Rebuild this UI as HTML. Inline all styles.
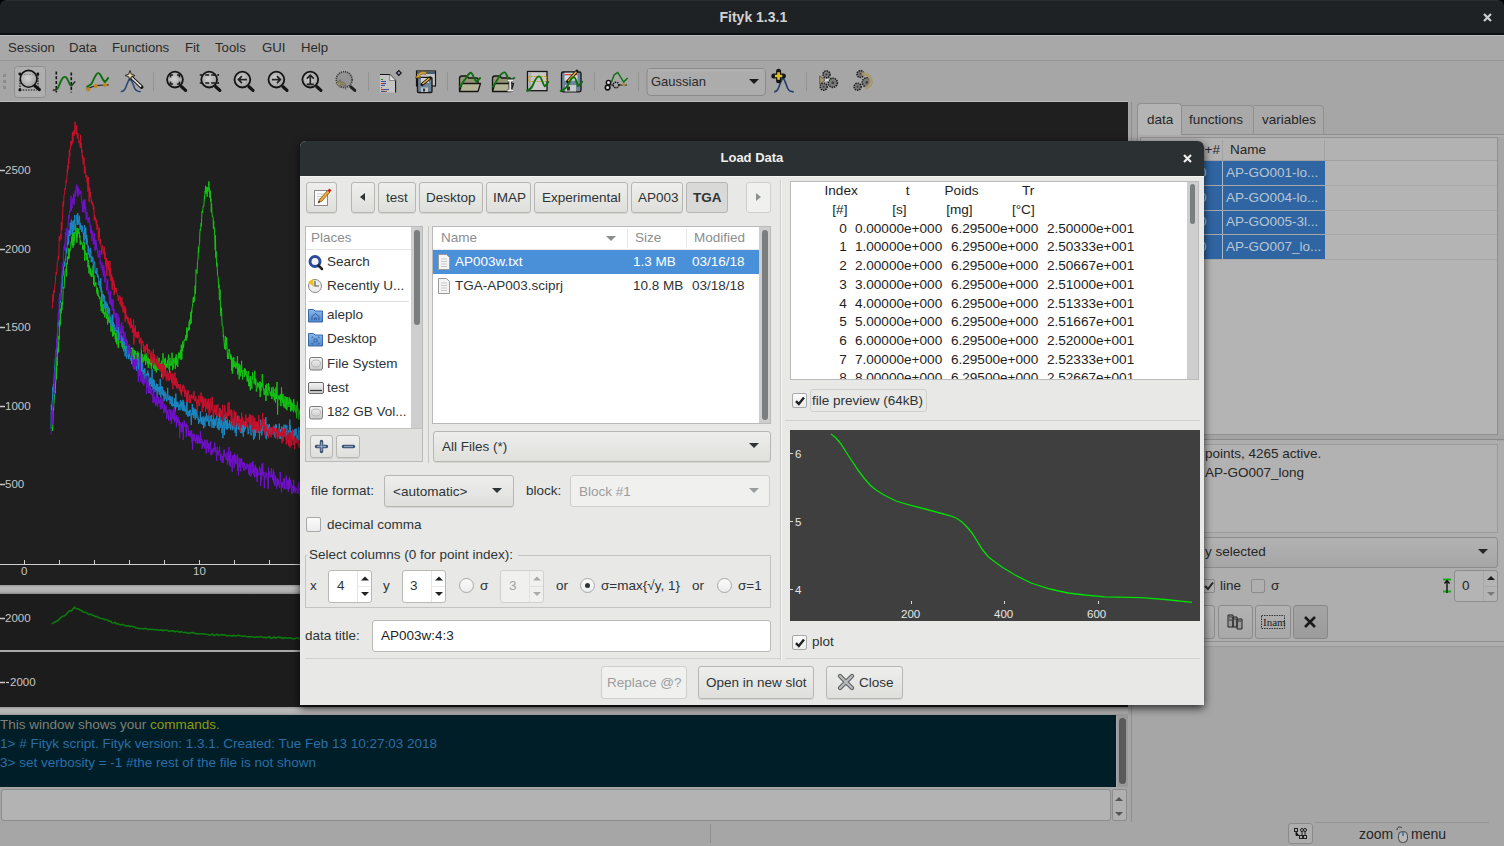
<!DOCTYPE html>
<html><head><meta charset="utf-8">
<style>
*{box-sizing:border-box;margin:0;padding:0}
html,body{width:1504px;height:846px;overflow:hidden;background:#a6a6a6;font-family:"Liberation Sans",sans-serif;font-size:13px;color:#2b2b2b}
.a{position:absolute}
.t{position:absolute;white-space:nowrap;line-height:1}
svg{position:absolute;overflow:visible}
/* main window */
#title{left:0;top:0;width:1504px;height:35px;background:#1f2224;border-bottom:2px solid #0c0e0f}
#menubar{left:0;top:35px;width:1504px;height:26px;background:#a8a8a8;border-top:1px solid #bdbdbd;border-bottom:1px solid #969696}
#toolbar{left:0;top:61px;width:1504px;height:41px;background:#a6a6a6}
.menu{top:41px;font-size:13.2px;color:#2a2a2a}
.sep{position:absolute;top:72px;width:1px;height:19px;background:#939393}
.plot{background:#1f1f1f}
.ylab{font-size:11px;color:#c6c6c6}
/* dialog */
#dlg{left:300px;top:141px;width:904px;height:564px;background:#e8e8e7;box-shadow:0 3px 9px rgba(0,0,0,.75);border-radius:6px 6px 0 0}
#dlgtitle{left:0;top:0;width:904px;height:35px;background:#2b3033;border-radius:6px 6px 0 0}
.btn{position:absolute;border:1px solid #b6b6b3;border-radius:3px;background:linear-gradient(#eeeeec,#dfdfdc);box-shadow:0 1px 0 rgba(0,0,0,.08)}
.btn .t{font-size:13.5px;color:#2e3436}
.frame{position:absolute;border:1px solid #bababa;background:#fff}
.cb{position:absolute;width:15px;height:15px;border:1px solid #a8a8a8;border-radius:2px;background:linear-gradient(#fbfbfb,#ececec)}
.radio{position:absolute;width:15px;height:15px;border:1px solid #a8a8a8;border-radius:50%;background:linear-gradient(#fbfbfb,#ececec)}
.dt{font-size:13.5px;color:#2e3436}
.pv{font-size:13.6px;color:#1e1e1e}
</style></head><body>
<!-- title bar -->
<div class="a" style="left:0;top:0;width:1504px;height:8px;background:#000"></div>
<div id="title" class="a" style="border-radius:6px 6px 0 0"></div>
<div class="a" style="left:6px;top:0;width:1492px;height:1px;background:#2a2e30"></div>
<div class="t" style="left:719.5px;top:9.8px;font-size:14px;font-weight:bold;color:#d2d2d2">Fityk 1.3.1</div>
<svg style="left:1483px;top:13px" width="9" height="9"><path d="M1 1L8 8M8 1L1 8" stroke="#cfcfcf" stroke-width="2.2"/></svg>
<!-- menu -->
<div id="menubar" class="a"></div>
<div class="t menu" style="left:8px">Session</div>
<div class="t menu" style="left:69px">Data</div>
<div class="t menu" style="left:112px">Functions</div>
<div class="t menu" style="left:185px">Fit</div>
<div class="t menu" style="left:215px">Tools</div>
<div class="t menu" style="left:262px">GUI</div>
<div class="t menu" style="left:301px">Help</div>
<!-- toolbar -->
<div id="toolbar" class="a"></div>
<!-- TOOLBAR -->
<svg style="left:0;top:0" width="900" height="102">
 <defs>
  <radialGradient id="lens" cx="0.45" cy="0.45" r="0.6"><stop offset="0" stop-color="#d2d2d2"/><stop offset="1" stop-color="#9c9c9c"/></radialGradient>
  <g id="mag"><circle cx="0" cy="0" r="7.9" fill="url(#lens)" stroke="#141414" stroke-width="1.8"/><path d="M6.6 7.2L10.6 10.8" stroke="#141414" stroke-width="3.2" stroke-linecap="round"/></g>
 </defs>
 <rect x="3" y="74" width="3" height="3" fill="#8c8c8c"/><rect x="3" y="80" width="3" height="3" fill="#8c8c8c"/><rect x="3" y="86" width="3" height="3" fill="#8c8c8c"/>
 <rect x="14.5" y="66.5" width="31" height="31" rx="3" fill="#afafaf" stroke="#8e8e8e"/>
 <!-- icon1 -->
 <path d="M20 90h17M38 75v13M20 80v10" stroke="#111" stroke-width="1.2" stroke-dasharray="1.5 1.2"/>
 <circle cx="28.6" cy="78.8" r="8.4" fill="url(#lens)" stroke="#111" stroke-width="1.6"/>
 <path d="M24 74.5h9" stroke="#888" stroke-width="1" stroke-dasharray="1.5 1.2"/>
 <circle cx="19.8" cy="74" r="1.4" fill="#111"/><circle cx="37.9" cy="74" r="1.4" fill="#111"/><circle cx="19.8" cy="90" r="1.4" fill="#111"/>
 <path d="M35 86L39.3 89.6" stroke="#111" stroke-width="3.2" stroke-linecap="round"/>
 <!-- icon2 -->
 <path d="M56.3 71.5v21M71.3 72.5v20" stroke="#151515" stroke-width="1.6" stroke-dasharray="3 1.8"/>
 <path d="M52.8 90.4L57 89.5" stroke="#333" stroke-width="1.6"/>
 <path d="M71 86.2L75.2 81.5" stroke="#333" stroke-width="1.6"/>
 <path d="M57 89.5C59 87 60 82 62 79C63.5 76.5 65.5 76 67 78.5C68.5 81 69.5 84.5 71 86.2" stroke="#0f6e0f" stroke-width="1.9" fill="none"/>
 <!-- icon3 -->
 <path d="M86.5 89L95.6 85.7L105 85L108.7 84.8" stroke="#2a2a2a" stroke-width="1.2" fill="none"/>
 <path d="M86.5 87.1C89 85.5 91 85 92 83C93 80.5 94 78 96 75C97.5 72.5 99 72.5 100.5 75C102 78 103 80.5 105 82C106 81 107.5 79 108.7 77.4" stroke="#0f6e0f" stroke-width="1.9" fill="none"/>
 <circle cx="88.3" cy="89.4" r="2" fill="#c88410"/><circle cx="95.8" cy="86" r="2" fill="#c88410"/><circle cx="105" cy="85" r="2" fill="#c88410"/>
 <!-- icon4 -->
 <path d="M120.8 91.8C123 91.5 124.5 90.5 125.5 88C127 84 128.5 80 130 78.3C131.5 80 133 84 134.5 88C135.5 90.5 137.5 91.5 140.8 91.8" stroke="#2b4a78" stroke-width="1.6" fill="none"/>
 <path d="M131 77L141.7 87.1" stroke="#161616" stroke-width="3.6" stroke-linecap="round"/><path d="M131.5 77.5L141.2 86.6" stroke="#e8e8e8" stroke-width="1.6"/>
 <path d="M130 70.5L131.3 74.2L135 75.5L131.3 76.8L130 80.5L128.7 76.8L125 75.5L128.7 74.2Z" fill="#e6d6a0" stroke="#1a1a1a" stroke-width="0.9"/>
 <rect x="153" y="72" width="1" height="19" fill="#939393"/>
 <!-- magnifiers -->
 <g transform="translate(175,79.6)"><use href="#mag"/><path d="M-4.5 -2v-2.5h2.5M2 -4.5h2.5v2.5M4.5 2v2.5h-2.5M-2 4.5h-2.5v-2.5" stroke="#1a1a1a" stroke-width="1.5" fill="none"/></g>
 <g transform="translate(209.2,79.6)"><use href="#mag"/><path d="M-9.5 -4.5h3M-4 -4.5h4M2 -4.5h4M-9.5 3.5h3M-4 3.5h4M2 3.5h4M9 -5.5v2M9 2.5v2" stroke="#1a1a1a" stroke-width="1.5"/></g>
 <g transform="translate(242.4,79.6)"><use href="#mag"/><path d="M4.5 0h-8.5M-0.5 -3.5L-4 0L-0.5 3.5" stroke="#222" stroke-width="1.7" fill="none"/></g>
 <g transform="translate(276.4,79.6)"><use href="#mag"/><path d="M-4.5 0h8.5M0.5 -3.5L4 0L0.5 3.5" stroke="#222" stroke-width="1.7" fill="none"/></g>
 <g transform="translate(310.3,79.6)"><use href="#mag"/><path d="M0 4.5v-9M-3.5 -1L0 -4.5L3.5 -1M-3.5 4.8h7" stroke="#222" stroke-width="1.7" fill="none"/></g>
 <g transform="translate(344.2,79.6)"><circle cx="0" cy="0" r="7.9" fill="#939393" stroke="#3a3a3a" stroke-width="1.6" stroke-dasharray="1.2 0.9"/><path d="M6.6 7.2L10.6 10.8" stroke="#222" stroke-width="3" stroke-linecap="round"/><path d="M-8 4L-4 0L-4 2.5C0 2 3 4 1.5 10L0.5 6C-0.5 5 -2.5 5 -4 5.5L-4 8Z" fill="#9a8a60" stroke="#555" stroke-width="0.6"/></g>
 <rect x="368" y="72" width="1" height="19" fill="#939393"/>
 <!-- script -->
 <path d="M380 74.5h9.6l6 6v12h-15.6z" fill="#c4c4c4"/>
 <path d="M380 74.5h9.6l6 6v12" stroke="#151515" stroke-width="1.1" fill="none"/>
 <path d="M389.6 74.5v6h6" fill="#e0e0e0" stroke="#555" stroke-width="0.6"/>
 <path d="M381 79.5h2M381 81.5h5M381 83.5h5M381 85.3h4M381 87.7h1M381 89.6h8M381 91.5h5" stroke="#3a4a9a" stroke-width="1"/>
 <path d="M381 79.5h2" stroke="#1a8a1a"/><path d="M381 83.5h2M381 89.6h3M385 91.5h2" stroke="#d03a20"/>
 <path d="M396.5 73L398.8 70.6L401.2 73L398.8 75.4Z" fill="#a898c0" stroke="#151515" stroke-width="1.2"/>
 <!-- session -->
 <rect x="416.5" y="71" width="19" height="15" fill="#c6c6c6" stroke="#151515" stroke-width="1.2"/>
 <rect x="417" y="71.5" width="18" height="2.5" fill="#4a5a70"/>
 <rect x="417.5" y="77.5" width="14.5" height="15" rx="1" fill="#6f8398" stroke="#151515" stroke-width="1.3"/>
 <rect x="421" y="78" width="8" height="5" fill="#d0d0d0"/><rect x="421" y="87.5" width="7" height="4.5" fill="#b8c0c8"/><rect x="423" y="88.5" width="2" height="3" fill="#333"/>
 <path d="M415 78L418 74.5C419 72 423 70.5 427 72.5L425.5 74.5C423 73.5 420.5 74 419.5 76L421 77.5Z" fill="#d4a63a" stroke="#6a5020" stroke-width="0.7"/>
 <path d="M422 84.5L430 77.9" stroke="#151515" stroke-width="3.2" stroke-linecap="round"/><path d="M422.5 84L429.5 78.3" stroke="#e6b830" stroke-width="1.5"/>
 <rect x="447" y="72" width="1" height="19" fill="#939393"/>
 <!-- open data -->
 <g id="fold"><path d="M459.5 90.5v-12c0-1.5 1-2.5 2.5-2.5h5l1.5 2h8c1 0 1.5 .8 1.5 1.5v4" fill="#959575" stroke="#151515" stroke-width="1.3"/><path d="M459.5 91.5l2.5 -8h18.5l-2.5 8z" fill="#b4b498" stroke="#151515" stroke-width="1.3" stroke-linejoin="round"/></g>
 <path d="M459.5 87.4C462 84 463.5 81 465.7 78.6C467.5 76 469 72.8 470.8 72.8C472.5 72.8 474 79 476.3 81.6C478 80.5 479.5 78.5 480.7 77.5" stroke="#0f6e0f" stroke-width="1.9" fill="none"/>
 <g transform="translate(33,0)"><use href="#fold"/></g>
 <path d="M492.5 87.4C495 84 497 80 499 77C501 74 503 72.4 504.8 72.4C506.5 72.4 507.5 79 509.2 80.5C511 80 513.5 78.5 515 77.5" stroke="#0f6e0f" stroke-width="1.9" fill="none"/>
 <path d="M507.5 80.5h5.5M507.5 90.5h5.5M510.2 81v9" stroke="#222" stroke-width="3.2"/><path d="M507.5 80.5h5.5M507.5 90.5h5.5M510.2 81v9" stroke="#e8e8e8" stroke-width="1.8"/>
 <!-- plot -->
 <rect x="527.5" y="71.5" width="19.5" height="19.2" fill="#c8c8c8" stroke="#151515" stroke-width="1.3"/>
 <rect x="528.2" y="72.2" width="3" height="18" fill="#b0b0b0"/>
 <rect x="528.5" y="76.5" width="18" height="5" fill="none" stroke="#c89a20" stroke-width="1" stroke-dasharray="1.6 1"/>
 <path d="M526.4 91C529 90 531 89 532.5 86C534 82 536 76.4 539.2 76.4C541.5 76.4 543 85 544.7 86.3C546 86 547.5 83 548.7 81.2" stroke="#0f6e0f" stroke-width="1.9" fill="none"/>
 <!-- save -->
 <rect x="561.5" y="72" width="19.5" height="19.8" rx="1.5" fill="#6f8398" stroke="#151515" stroke-width="1.3"/>
 <rect x="564.5" y="72.7" width="13" height="8" fill="#d8d8d8"/><path d="M564.5 74.6h13" stroke="#d04040" stroke-width="1.2"/>
 <rect x="565" y="85" width="11" height="6.5" fill="#c8c8c8"/><rect x="567" y="86.5" width="3" height="4" fill="#333"/>
 <path d="M567.7 81.6L576.9 71.3" stroke="#151515" stroke-width="3.2" stroke-linecap="round"/><path d="M568.2 81L576.4 71.8" stroke="#e6b830" stroke-width="1.5"/>
 <path d="M560 91.4C563 90 566 89 568 85C570 80 572 77.2 574 77.2C576 77.2 577 85 578 86C579.5 85 581 83 582.7 81.2" stroke="#0f6e0f" stroke-width="1.9" fill="none"/>
 <rect x="594" y="72" width="1" height="19" fill="#939393"/>
 <!-- icon fit -->
 <path d="M611.5 82L614.2 74.8L617.7 72.4L623.7 82L627.6 78" stroke="#0f6e0f" stroke-width="1.4" fill="none"/>
 <path d="M610 85h17" stroke="#222" stroke-width="1.1"/>
 <circle cx="608.5" cy="82.6" r="2.2" fill="#ddd" stroke="#111" stroke-width="1.4"/>
 <circle cx="607.6" cy="87.6" r="2.3" fill="#ddd" stroke="#111" stroke-width="1.6"/>
 <circle cx="616" cy="85" r="2.8" fill="#aaa" stroke="#111" stroke-width="1.5" stroke-dasharray="1.5 0.8"/>
 <path d="M621.5 84.5L623.7 82.5L625.9 84.5L623.7 86.5Z" fill="#a88a40"/>
 <rect x="638" y="72" width="1" height="19" fill="#939393"/>
 <!-- combo -->
 <rect x="647" y="68.5" width="118.5" height="27" rx="3.5" fill="#acacac" stroke="#8a8a8a"/>
 <rect x="648" y="69.5" width="116.5" height="1" fill="#b6b6b6"/>
 <path d="M749 79h10l-5 5z" fill="#1a1a1a"/>
 <!-- add peak -->
 <path d="M774.2 91.9C776.5 91.7 777.5 90.5 778.5 88C780 84 781.5 79 783 78C784.5 79 786 84 787.5 88C788.5 90.5 790 91.7 793.7 91.9" stroke="#233e68" stroke-width="1.6" fill="none"/>
 <path d="M778.6 71.2v9.6M773.8 76h9.6" stroke="#141414" stroke-width="5" stroke-linecap="round"/><path d="M778.6 72.3v7.4M774.9 76h7.4" stroke="#dcc030" stroke-width="2.6"/>
 <rect x="806" y="72" width="1" height="19" fill="#939393"/>
 <!-- gears -->
 <g fill="#7a7a7a" stroke="#1e1e1e" stroke-width="1.6" stroke-dasharray="1.4 0.9">
  <circle cx="826.5" cy="74.4" r="3.5"/><circle cx="832.8" cy="82.8" r="4.6"/><circle cx="823.7" cy="86.7" r="3.5"/>
  <circle cx="860.4" cy="74" r="3.4"/><circle cx="866.8" cy="82.4" r="4.6"/><circle cx="857.6" cy="86.7" r="3.5"/>
 </g>
 <g fill="#3a3a3a"><circle cx="826.5" cy="74.4" r="1"/><circle cx="832.8" cy="82.8" r="1.3"/><circle cx="823.7" cy="86.7" r="1"/><circle cx="860.4" cy="74" r="1"/><circle cx="866.8" cy="82.4" r="1.3"/><circle cx="857.6" cy="86.7" r="1"/></g>
 <path d="M819.7 76L825 80L819.7 84Z" fill="#a89a70" stroke="#333" stroke-width="0.6"/>
 <path d="M825 80h4" stroke="#eee" stroke-width="1.5"/>
 <path d="M862 74C867 73 872 77 871 83C870 86 868 88 865 88" stroke="#a89a70" stroke-width="3.2" fill="none"/>
</svg>
<div class="t" style="left:651px;top:75px;font-size:13px;color:#2a2a2a">Gaussian</div>

<!-- plot area -->
<div class="a plot" style="left:0;top:102px;width:1128px;height:483px"></div>
<div class="a" style="left:0;top:101px;width:1128px;height:1px;background:#bcbcbc"></div>
<div class="a" style="left:1131px;top:102px;width:1px;height:720px;background:#8e8e8e"></div>
<!-- MAIN PLOT -->
<svg style="left:0;top:102px" width="1128" height="483" viewBox="0 102 1128 483">
 <g fill="none" stroke-width="1" stroke-linejoin="miter">
  <polyline points="52.00,429.1 52.30,427.0 52.60,430.9 52.90,422.3 53.20,408.0 53.50,411.0 53.80,404.1 54.10,403.3 54.40,391.3 54.70,395.3 55.00,391.0 55.30,392.8 55.60,383.1 55.90,379.9 56.20,366.9 56.50,379.3 56.80,356.8 57.10,366.0 57.40,355.5 57.70,349.0 58.00,345.9 58.30,341.7 58.60,352.4 58.90,335.9 59.20,339.5 59.50,321.9 59.80,327.0 60.10,320.1 60.40,324.4 60.70,308.7 61.00,313.5 61.30,312.9 61.60,302.5 61.90,310.3 62.20,303.8 62.50,304.4 62.80,300.3 63.10,289.7 63.40,287.5 63.70,287.1 64.00,288.3 64.30,285.7 64.60,275.9 64.90,273.3 65.20,270.4 65.50,269.7 65.80,269.6 66.10,268.4 66.40,276.4 66.70,263.4 67.00,262.7 67.30,264.4 67.60,256.5 67.90,257.4 68.20,257.5 68.50,259.2 68.80,248.3 69.10,258.5 69.40,249.2 69.70,251.8 70.00,251.2 70.30,248.8 70.60,248.9 70.90,243.3 71.20,241.6 71.50,242.6 71.80,236.3 72.10,245.5 72.40,236.3 72.70,233.6 73.00,247.7 73.30,237.6 73.60,232.5 73.90,245.3 74.20,235.2 74.50,240.8 74.80,232.0 75.10,234.1 75.40,227.2 75.70,225.8 76.00,229.4 76.30,232.8 76.60,236.2 76.90,242.8 77.20,227.9 77.50,237.6 77.80,231.1 78.10,233.8 78.40,228.6 78.70,229.3 79.00,233.1 79.30,231.9 79.60,237.8 79.90,235.4 80.20,244.7 80.50,240.5 80.80,241.3 81.10,242.5 81.40,244.2 81.70,242.4 82.00,242.9 82.30,243.4 82.60,249.3 82.90,248.7 83.20,247.6 83.50,250.1 83.80,244.9 84.10,250.2 84.40,242.4 84.70,260.8 85.00,250.4 85.30,251.8 85.60,254.6 85.90,253.0 86.20,252.9 86.50,260.2 86.80,256.5 87.10,253.0 87.40,259.9 87.70,256.8 88.00,267.3 88.30,260.2 88.60,262.2 88.90,272.9 89.20,273.5 89.50,265.5 89.80,268.7 90.10,271.8 90.40,275.4 90.70,268.4 91.00,270.6 91.30,277.0 91.60,273.2 91.90,276.3 92.20,276.7 92.50,270.0 92.80,272.2 93.10,265.4 93.40,276.9 93.70,284.9 94.00,275.1 94.30,286.4 94.60,286.4 94.90,282.8 95.20,284.0 95.50,285.4 95.80,282.2 96.10,285.8 96.40,287.8 96.70,291.7 97.00,293.5 97.30,287.7 97.60,295.6 97.90,289.6 98.20,293.3 98.50,296.6 98.80,295.9 99.10,296.4 99.40,299.2 99.70,296.6 100.00,297.1 100.30,299.8 100.60,305.6 100.90,301.7 101.20,311.2 101.50,304.4 101.80,290.8 102.10,303.0 102.40,312.9 102.70,306.3 103.00,305.1 103.30,303.9 103.60,314.2 103.90,313.5 104.20,312.8 104.50,312.4 104.80,317.5 105.10,315.5 105.40,307.2 105.70,313.8 106.00,314.7 106.30,314.2 106.60,318.8 106.90,316.2 107.20,303.9 107.50,324.4 107.80,322.8 108.10,318.4 108.40,318.0 108.70,321.3 109.00,315.3 109.30,323.0 109.60,321.4 109.90,321.5 110.20,319.7 110.50,321.5 110.80,330.1 111.10,331.8 111.40,328.8 111.70,327.1 112.00,324.1 112.30,331.9 112.60,336.5 112.90,323.0 113.20,336.0 113.50,322.0 113.80,330.7 114.10,334.6 114.40,327.6 114.70,327.6 115.00,335.8 115.30,339.2 115.60,333.5 115.90,341.8 116.20,332.8 116.50,344.2 116.80,337.6 117.10,338.1 117.40,340.1 117.70,339.1 118.00,346.1 118.30,348.0 118.60,341.0 118.90,338.2 119.20,334.0 119.50,336.2 119.80,339.8 120.10,339.7 120.40,340.2 120.70,340.7 121.00,343.2 121.30,341.7 121.60,337.1 121.90,346.8 122.20,345.9 122.50,340.1 122.80,348.5 123.10,340.1 123.40,342.3 123.70,335.7 124.00,347.7 124.30,344.3 124.60,349.3 124.90,348.0 125.20,345.6 125.50,346.2 125.80,351.1 126.10,345.4 126.40,345.8 126.70,347.1 127.00,350.6 127.30,351.4 127.60,356.1 127.90,347.6 128.20,353.9 128.50,345.7 128.80,351.6 129.10,349.8 129.40,357.2 129.70,352.6 130.00,348.2 130.30,353.0 130.60,352.3 130.90,349.7 131.20,350.1 131.50,347.6 131.80,364.1 132.10,352.9 132.40,356.9 132.70,347.8 133.00,348.4 133.30,352.8 133.60,353.2 133.90,357.6 134.20,350.0 134.50,357.1 134.80,361.7 135.10,351.2 135.40,352.7 135.70,351.3 136.00,357.2 136.30,357.4 136.60,363.6 136.90,353.1 137.20,357.0 137.50,361.0 137.80,351.4 138.10,356.6 138.40,353.0 138.70,353.9 139.00,360.1 139.30,360.3 139.60,368.7 139.90,363.6 140.20,363.3 140.50,357.1 140.80,356.6 141.10,358.7 141.40,348.2 141.70,365.6 142.00,362.2 142.30,353.9 142.60,356.7 142.90,362.7 143.20,361.1 143.50,357.5 143.80,361.2 144.10,359.2 144.40,355.2 144.70,360.4 145.00,359.9 145.30,353.2 145.60,364.9 145.90,353.3 146.20,361.4 146.50,355.9 146.80,357.0 147.10,357.7 147.40,364.0 147.70,355.5 148.00,360.3 148.30,368.1 148.60,358.4 148.90,361.4 149.20,360.2 149.50,359.3 149.80,364.1 150.10,359.2 150.40,365.3 150.70,362.6 151.00,358.4 151.30,368.8 151.60,362.3 151.90,361.6 152.20,358.9 152.50,361.0 152.80,362.8 153.10,364.1 153.40,368.3 153.70,357.7 154.00,362.1 154.30,369.0 154.60,364.7 154.90,365.8 155.20,371.1 155.50,365.7 155.80,366.4 156.10,364.3 156.40,372.4 156.70,369.4 157.00,361.7 157.30,367.4 157.60,360.0 157.90,370.0 158.20,368.3 158.50,364.7 158.80,363.8 159.10,357.8 159.40,369.2 159.70,365.4 160.00,364.7 160.30,369.3 160.60,363.3 160.90,363.8 161.20,363.4 161.50,360.7 161.80,377.3 162.10,366.0 162.40,365.4 162.70,371.0 163.00,353.3 163.30,367.2 163.60,367.5 163.90,363.3 164.20,369.7 164.50,358.8 164.80,367.9 165.10,371.7 165.40,357.8 165.70,361.0 166.00,366.4 166.30,366.8 166.60,363.8 166.90,368.0 167.20,367.3 167.50,360.0 167.80,365.3 168.10,359.9 168.40,356.1 168.70,354.5 169.00,369.4 169.30,364.1 169.60,373.1 169.90,357.8 170.20,362.5 170.50,365.3 170.80,363.0 171.10,365.7 171.40,364.0 171.70,360.4 172.00,352.7 172.30,358.6 172.60,370.2 172.90,365.8 173.20,368.3 173.50,359.5 173.80,361.1 174.10,357.9 174.40,363.3 174.70,361.7 175.00,363.3 175.30,368.8 175.60,357.2 175.90,364.0 176.20,354.4 176.50,365.2 176.80,358.3 177.10,359.7 177.40,360.4 177.70,366.9 178.00,359.3 178.30,356.5 178.60,352.8 178.90,358.4 179.20,352.7 179.50,353.5 179.80,358.3 180.10,357.2 180.40,350.3 180.70,355.7 181.00,359.8 181.30,344.7 181.60,356.5 181.90,359.2 182.20,346.4 182.50,350.9 182.80,341.4 183.10,348.2 183.40,344.5 183.70,346.6 184.00,340.4 184.30,340.1 184.60,341.0 184.90,339.1 185.20,338.7 185.50,339.8 185.80,335.0 186.10,338.5 186.40,340.5 186.70,327.4 187.00,337.7 187.30,332.8 187.60,330.4 187.90,328.7 188.20,329.3 188.50,327.8 188.80,330.7 189.10,321.7 189.40,329.9 189.70,319.7 190.00,324.4 190.30,324.3 190.60,312.2 190.90,320.4 191.20,323.4 191.50,310.0 191.80,312.6 192.10,307.6 192.40,306.7 192.70,303.6 193.00,300.3 193.30,297.2 193.60,302.6 193.90,296.8 194.20,301.6 194.50,297.8 194.80,294.2 195.10,285.6 195.40,293.9 195.70,288.1 196.00,269.6 196.30,270.9 196.60,270.5 196.90,273.5 197.20,271.6 197.50,261.6 197.80,260.7 198.10,259.4 198.40,246.8 198.70,252.5 199.00,245.3 199.30,244.2 199.60,242.6 199.90,231.7 200.20,229.3 200.50,230.6 200.80,227.7 201.10,223.0 201.40,226.4 201.70,217.6 202.00,211.4 202.30,212.8 202.60,211.0 202.90,208.7 203.20,206.1 203.50,206.6 203.80,206.5 204.10,202.2 204.40,196.2 204.70,199.0 205.00,190.9 205.30,192.2 205.60,185.8 205.90,193.5 206.20,187.0 206.50,189.2 206.80,194.6 207.10,196.7 207.40,191.3 207.70,187.3 208.00,191.7 208.30,189.6 208.60,186.6 208.90,181.4 209.20,189.3 209.50,188.4 209.80,197.7 210.10,190.6 210.40,193.7 210.70,201.8 211.00,198.5 211.30,212.2 211.60,203.5 211.90,212.2 212.20,214.6 212.50,217.1 212.80,216.6 213.10,217.5 213.40,228.3 213.70,220.8 214.00,229.1 214.30,227.8 214.60,235.5 214.90,240.2 215.20,249.9 215.50,235.4 215.80,257.7 216.10,251.4 216.40,260.2 216.70,266.4 217.00,262.7 217.30,269.3 217.60,275.5 217.90,276.4 218.20,277.3 218.50,284.9 218.80,288.2 219.10,284.5 219.40,300.1 219.70,298.1 220.00,289.5 220.30,299.5 220.60,313.7 220.90,316.1 221.20,313.3 221.50,307.7 221.80,317.1 222.10,325.8 222.40,325.9 222.70,325.7 223.00,326.9 223.30,336.8 223.60,335.2 223.90,340.6 224.20,342.9 224.50,348.8 224.80,343.2 225.10,344.3 225.40,336.2 225.70,349.8 226.00,349.6 226.30,346.4 226.60,337.3 226.90,345.7 227.20,349.3 227.50,359.0 227.80,353.2 228.10,355.0 228.40,355.9 228.70,359.0 229.00,348.9 229.30,351.0 229.60,350.4 229.90,355.1 230.20,355.7 230.50,359.0 230.80,354.3 231.10,360.1 231.40,356.2 231.70,370.6 232.00,359.8 232.30,373.7 232.60,369.9 232.90,357.8 233.20,367.6 233.50,366.3 233.80,357.2 234.10,366.9 234.40,364.1 234.70,366.4 235.00,361.4 235.30,365.2 235.60,368.3 235.90,365.2 236.20,363.6 236.50,365.9 236.80,362.6 237.10,368.7 237.40,356.2 237.70,374.5 238.00,368.4 238.30,370.5 238.60,372.5 238.90,363.5 239.20,379.4 239.50,364.7 239.80,372.0 240.10,371.6 240.40,376.3 240.70,370.8 241.00,364.9 241.30,372.8 241.60,360.8 241.90,371.1 242.20,370.3 242.50,379.5 242.80,371.7 243.10,371.2 243.40,370.1 243.70,370.0 244.00,371.6 244.30,377.0 244.60,368.2 244.90,374.0 245.20,368.8 245.50,374.8 245.80,372.0 246.10,370.7 246.40,373.9 246.70,377.2 247.00,380.4 247.30,381.5 247.60,377.1 247.90,373.5 248.20,371.0 248.50,381.9 248.80,386.1 249.10,380.7 249.40,386.3 249.70,377.7 250.00,378.3 250.30,390.4 250.60,375.9 250.90,383.2 251.20,382.4 251.50,381.6 251.80,388.7 252.10,377.4 252.40,379.5 252.70,372.4 253.00,377.2 253.30,379.7 253.60,380.4 253.90,381.4 254.20,383.8 254.50,379.7 254.80,370.7 255.10,383.7 255.40,385.1 255.70,378.3 256.00,380.1 256.30,391.6 256.60,388.5 256.90,388.9 257.20,387.3 257.50,385.1 257.80,382.4 258.10,387.4 258.40,384.2 258.70,383.3 259.00,385.3 259.30,385.2 259.60,389.7 259.90,381.7 260.20,397.1 260.50,381.8 260.80,384.6 261.10,390.8 261.40,383.1 261.70,384.9 262.00,387.3 262.30,374.2 262.60,385.3 262.90,383.5 263.20,386.8 263.50,390.3 263.80,391.1 264.10,395.1 264.40,395.0 264.70,393.4 265.00,388.8 265.30,393.8 265.60,385.0 265.90,401.0 266.20,396.1 266.50,393.4 266.80,383.9 267.10,387.6 267.40,394.5 267.70,393.4 268.00,395.6 268.30,383.2 268.60,385.6 268.90,390.3 269.20,387.2 269.50,391.6 269.80,392.0 270.10,393.7 270.40,391.7 270.70,395.0 271.00,396.1 271.30,393.5 271.60,387.6 271.90,398.9 272.20,394.4 272.50,395.5 272.80,394.5 273.10,386.8 273.40,396.7 273.70,391.4 274.00,389.1 274.30,400.4 274.60,393.5 274.90,396.3 275.20,399.2 275.50,402.6 275.80,387.6 276.10,392.5 276.40,399.0 276.70,393.3 277.00,382.0 277.30,397.3 277.60,414.7 277.90,400.6 278.20,398.3 278.50,395.5 278.80,398.6 279.10,397.7 279.40,395.8 279.70,399.4 280.00,400.1 280.30,394.2 280.60,403.4 280.90,406.2 281.20,402.8 281.50,387.3 281.80,400.2 282.10,399.4 282.40,395.7 282.70,402.9 283.00,393.8 283.30,406.2 283.60,402.6 283.90,398.9 284.20,407.6 284.50,403.6 284.80,403.2 285.10,396.2 285.40,404.5 285.70,408.6 286.00,407.4 286.30,397.0 286.60,409.1 286.90,410.2 287.20,407.1 287.50,401.8 287.80,397.1 288.10,399.9 288.40,401.6 288.70,405.5 289.00,407.0 289.30,401.4 289.60,397.6 289.90,403.3 290.20,399.4 290.50,411.4 290.80,400.2 291.10,408.0 291.40,409.7 291.70,401.9 292.00,410.9 292.30,406.0 292.60,403.3 292.90,402.8 293.20,407.7 293.50,412.2 293.80,399.2 294.10,410.5 294.40,407.3 294.70,404.8 295.00,407.9 295.30,408.5 295.60,408.5 295.90,412.6 296.20,405.2 296.50,418.2 296.80,413.6 297.10,407.2 297.40,401.5 297.70,410.2 298.00,408.7 298.30,414.0 298.60,414.1 298.90,419.6 299.20,410.7 299.50,415.0 299.80,409.9" stroke="#12c412"/>
  <polyline points="51.00,429.0 51.30,404.8 51.60,413.8 51.90,405.5 52.20,402.0 52.50,399.1 52.80,387.1 53.10,391.0 53.40,384.2 53.70,398.6 54.00,381.0 54.30,374.3 54.60,370.5 54.90,364.7 55.20,358.9 55.50,357.7 55.80,357.4 56.10,350.1 56.40,351.2 56.70,342.0 57.00,338.9 57.30,341.4 57.60,332.9 57.90,324.2 58.20,322.2 58.50,322.4 58.80,325.5 59.10,312.8 59.40,309.9 59.70,312.4 60.00,301.1 60.30,300.7 60.60,302.9 60.90,298.6 61.20,293.4 61.50,292.9 61.80,274.6 62.10,288.5 62.40,272.1 62.70,270.7 63.00,276.2 63.30,275.1 63.60,267.0 63.90,261.3 64.20,264.0 64.50,262.0 64.80,266.8 65.10,262.2 65.40,258.2 65.70,260.5 66.00,253.1 66.30,248.3 66.60,253.3 66.90,251.6 67.20,246.5 67.50,242.3 67.80,245.1 68.10,231.5 68.40,243.8 68.70,241.3 69.00,230.3 69.30,236.1 69.60,230.0 69.90,235.9 70.20,222.6 70.50,227.0 70.80,233.5 71.10,234.9 71.40,219.7 71.70,226.4 72.00,229.4 72.30,224.7 72.60,233.8 72.90,221.0 73.20,227.2 73.50,220.4 73.80,230.6 74.10,223.7 74.40,221.6 74.70,215.0 75.00,229.4 75.30,224.7 75.60,224.1 75.90,225.2 76.20,221.1 76.50,216.2 76.80,214.9 77.10,214.7 77.40,224.9 77.70,213.1 78.00,217.5 78.30,219.3 78.60,222.4 78.90,224.6 79.20,217.2 79.50,215.7 79.80,223.9 80.10,229.9 80.40,223.3 80.70,226.8 81.00,225.1 81.30,228.4 81.60,226.7 81.90,232.0 82.20,225.6 82.50,230.3 82.80,229.8 83.10,233.4 83.40,232.6 83.70,243.5 84.00,239.5 84.30,240.1 84.60,225.2 84.90,233.3 85.20,233.0 85.50,239.0 85.80,227.6 86.10,243.8 86.40,244.4 86.70,234.9 87.00,237.4 87.30,239.1 87.60,243.9 87.90,247.5 88.20,254.7 88.50,245.8 88.80,251.0 89.10,249.4 89.40,257.4 89.70,253.9 90.00,257.7 90.30,247.9 90.60,252.8 90.90,251.1 91.20,262.3 91.50,259.6 91.80,256.3 92.10,256.7 92.40,261.8 92.70,257.6 93.00,257.6 93.30,264.8 93.60,274.5 93.90,263.6 94.20,263.2 94.50,261.5 94.80,261.8 95.10,271.0 95.40,273.4 95.70,270.7 96.00,273.1 96.30,273.2 96.60,274.3 96.90,268.0 97.20,273.7 97.50,277.2 97.80,274.2 98.10,276.6 98.40,276.1 98.70,279.2 99.00,285.4 99.30,280.9 99.60,283.0 99.90,288.2 100.20,288.4 100.50,289.3 100.80,278.2 101.10,292.1 101.40,287.1 101.70,290.7 102.00,294.7 102.30,296.7 102.60,297.4 102.90,294.4 103.20,301.7 103.50,294.3 103.80,295.8 104.10,300.8 104.40,295.8 104.70,308.6 105.00,304.5 105.30,310.5 105.60,301.7 105.90,301.0 106.20,304.3 106.50,307.7 106.80,302.8 107.10,308.0 107.40,307.1 107.70,315.2 108.00,306.1 108.30,314.5 108.60,308.0 108.90,313.5 109.20,309.5 109.50,308.3 109.80,315.0 110.10,319.8 110.40,316.9 110.70,319.8 111.00,325.2 111.30,320.1 111.60,320.7 111.90,319.5 112.20,314.5 112.50,325.8 112.80,315.7 113.10,327.2 113.40,325.1 113.70,331.1 114.00,326.7 114.30,324.3 114.60,330.4 114.90,327.2 115.20,329.5 115.50,331.0 115.80,330.7 116.10,330.9 116.40,328.6 116.70,331.9 117.00,323.8 117.30,333.0 117.60,323.1 117.90,339.6 118.20,340.7 118.50,327.0 118.80,336.7 119.10,336.0 119.40,332.4 119.70,339.9 120.00,336.0 120.30,330.7 120.60,337.8 120.90,338.8 121.20,340.4 121.50,335.0 121.80,343.6 122.10,344.6 122.40,336.8 122.70,339.4 123.00,342.4 123.30,340.8 123.60,351.4 123.90,345.2 124.20,340.3 124.50,341.7 124.80,345.4 125.10,356.3 125.40,345.9 125.70,347.7 126.00,349.9 126.30,347.9 126.60,358.6 126.90,346.7 127.20,352.8 127.50,350.7 127.80,353.2 128.10,345.8 128.40,359.2 128.70,351.4 129.00,352.6 129.30,348.8 129.60,350.1 129.90,356.3 130.20,358.7 130.50,358.1 130.80,360.6 131.10,358.9 131.40,356.4 131.70,360.4 132.00,359.8 132.30,357.2 132.60,361.4 132.90,364.3 133.20,360.2 133.50,358.0 133.80,363.2 134.10,368.9 134.40,360.1 134.70,361.1 135.00,361.4 135.30,367.7 135.60,354.6 135.90,364.7 136.20,368.7 136.50,360.2 136.80,370.7 137.10,366.9 137.40,362.5 137.70,366.1 138.00,358.8 138.30,363.5 138.60,374.4 138.90,362.7 139.20,375.2 139.50,367.0 139.80,372.1 140.10,368.3 140.40,358.6 140.70,366.3 141.00,370.0 141.30,364.5 141.60,364.0 141.90,371.9 142.20,367.8 142.50,363.5 142.80,368.3 143.10,375.5 143.40,370.0 143.70,376.6 144.00,379.5 144.30,373.3 144.60,368.5 144.90,368.2 145.20,374.1 145.50,378.5 145.80,376.1 146.10,377.7 146.40,373.7 146.70,377.4 147.00,374.3 147.30,375.3 147.60,371.4 147.90,370.6 148.20,375.7 148.50,373.3 148.80,374.3 149.10,381.9 149.40,378.8 149.70,392.5 150.00,384.1 150.30,377.6 150.60,384.1 150.90,382.6 151.20,378.4 151.50,386.7 151.80,378.7 152.10,369.1 152.40,386.4 152.70,380.5 153.00,390.1 153.30,381.1 153.60,379.1 153.90,391.5 154.20,380.3 154.50,386.3 154.80,392.1 155.10,386.6 155.40,386.0 155.70,387.0 156.00,390.5 156.30,383.5 156.60,390.0 156.90,390.1 157.20,398.0 157.50,386.5 157.80,384.2 158.10,391.7 158.40,387.0 158.70,390.2 159.00,389.8 159.30,394.6 159.60,386.8 159.90,389.5 160.20,378.9 160.50,386.5 160.80,397.4 161.10,387.9 161.40,388.0 161.70,386.0 162.00,394.2 162.30,392.6 162.60,386.9 162.90,395.3 163.20,393.7 163.50,396.1 163.80,390.2 164.10,400.9 164.40,395.3 164.70,393.2 165.00,391.7 165.30,393.2 165.60,398.3 165.90,393.5 166.20,399.7 166.50,397.8 166.80,401.4 167.10,399.3 167.40,395.6 167.70,387.8 168.00,397.7 168.30,400.1 168.60,397.6 168.90,399.6 169.20,395.3 169.50,395.9 169.80,398.0 170.10,404.1 170.40,399.0 170.70,396.4 171.00,398.7 171.30,398.4 171.60,405.6 171.90,401.6 172.20,396.6 172.50,406.3 172.80,406.5 173.10,404.8 173.40,404.2 173.70,406.0 174.00,403.6 174.30,404.9 174.60,398.2 174.90,408.5 175.20,403.2 175.50,411.3 175.80,393.6 176.10,405.9 176.40,407.3 176.70,401.7 177.00,405.4 177.30,406.9 177.60,406.4 177.90,401.7 178.20,403.6 178.50,409.0 178.80,410.3 179.10,405.3 179.40,405.4 179.70,404.6 180.00,410.1 180.30,401.1 180.60,400.1 180.90,406.7 181.20,401.5 181.50,404.0 181.80,407.2 182.10,409.1 182.40,402.5 182.70,411.0 183.00,399.8 183.30,410.3 183.60,401.1 183.90,402.7 184.20,411.3 184.50,406.9 184.80,405.4 185.10,407.2 185.40,411.4 185.70,409.3 186.00,409.6 186.30,414.6 186.60,407.0 186.90,392.9 187.20,408.3 187.50,416.0 187.80,415.4 188.10,416.9 188.40,411.3 188.70,411.0 189.00,415.6 189.30,410.4 189.60,416.0 189.90,415.7 190.20,409.7 190.50,412.6 190.80,412.6 191.10,421.0 191.40,425.0 191.70,413.3 192.00,414.1 192.30,404.1 192.60,415.1 192.90,414.3 193.20,409.7 193.50,417.9 193.80,407.7 194.10,413.7 194.40,415.4 194.70,409.4 195.00,418.7 195.30,419.7 195.60,409.1 195.90,409.1 196.20,418.0 196.50,415.3 196.80,410.2 197.10,414.3 197.40,415.3 197.70,415.2 198.00,419.6 198.30,417.7 198.60,423.9 198.90,422.3 199.20,419.3 199.50,421.1 199.80,422.3 200.10,419.7 200.40,411.3 200.70,420.6 201.00,417.2 201.30,424.1 201.60,417.5 201.90,419.5 202.20,418.7 202.50,424.8 202.80,418.3 203.10,416.4 203.40,419.0 203.70,428.2 204.00,418.6 204.30,417.9 204.60,419.2 204.90,426.6 205.20,416.5 205.50,418.5 205.80,417.6 206.10,421.5 206.40,413.4 206.70,415.7 207.00,418.6 207.30,421.3 207.60,418.8 207.90,416.9 208.20,415.4 208.50,421.6 208.80,425.7 209.10,420.9 209.40,420.4 209.70,426.3 210.00,415.6 210.30,418.5 210.60,418.8 210.90,421.4 211.20,420.0 211.50,414.9 211.80,425.3 212.10,427.9 212.40,419.4 212.70,422.4 213.00,421.9 213.30,424.3 213.60,414.4 213.90,428.1 214.20,419.1 214.50,426.8 214.80,421.7 215.10,419.7 215.40,420.9 215.70,425.6 216.00,417.9 216.30,420.2 216.60,419.8 216.90,414.5 217.20,427.8 217.50,424.7 217.80,422.2 218.10,429.2 218.40,418.3 218.70,422.3 219.00,430.3 219.30,427.1 219.60,413.1 219.90,408.3 220.20,418.5 220.50,427.8 220.80,421.1 221.10,422.2 221.40,425.9 221.70,419.4 222.00,433.2 222.30,426.9 222.60,425.5 222.90,438.2 223.20,420.9 223.50,425.8 223.80,421.8 224.10,429.4 224.40,435.0 224.70,420.5 225.00,414.3 225.30,415.4 225.60,425.6 225.90,428.6 226.20,428.8 226.50,420.6 226.80,420.6 227.10,429.8 227.40,419.4 227.70,429.1 228.00,423.3 228.30,427.8 228.60,427.5 228.90,427.9 229.20,428.1 229.50,420.2 229.80,425.9 230.10,424.7 230.40,426.1 230.70,430.2 231.00,423.6 231.30,421.8 231.60,421.7 231.90,423.6 232.20,428.3 232.50,421.5 232.80,430.2 233.10,426.5 233.40,424.2 233.70,419.4 234.00,426.4 234.30,428.4 234.60,417.7 234.90,430.7 235.20,432.8 235.50,427.1 235.80,427.8 236.10,436.3 236.40,431.2 236.70,421.8 237.00,425.8 237.30,425.2 237.60,425.3 237.90,415.6 238.20,429.4 238.50,423.3 238.80,426.9 239.10,425.6 239.40,430.1 239.70,425.0 240.00,422.8 240.30,428.7 240.60,432.6 240.90,425.1 241.20,432.6 241.50,427.7 241.80,424.3 242.10,433.4 242.40,421.4 242.70,431.2 243.00,424.6 243.30,436.7 243.60,421.5 243.90,423.3 244.20,431.7 244.50,427.9 244.80,427.3 245.10,425.2 245.40,429.2 245.70,421.1 246.00,422.4 246.30,426.7 246.60,423.8 246.90,424.4 247.20,427.2 247.50,427.0 247.80,426.7 248.10,434.3 248.40,432.2 248.70,433.2 249.00,427.7 249.30,425.7 249.60,421.5 249.90,426.5 250.20,418.8 250.50,425.5 250.80,431.5 251.10,435.3 251.40,432.4 251.70,424.4 252.00,428.6 252.30,424.8 252.60,431.9 252.90,427.9 253.20,432.2 253.50,439.7 253.80,432.5 254.10,438.8 254.40,429.3 254.70,427.1 255.00,434.5 255.30,436.2 255.60,423.2 255.90,429.0 256.20,422.4 256.50,427.9 256.80,432.7 257.10,428.5 257.40,426.4 257.70,422.7 258.00,430.6 258.30,432.5 258.60,431.7 258.90,430.2 259.20,430.4 259.50,439.6 259.80,428.9 260.10,428.6 260.40,432.5 260.70,419.8 261.00,429.0 261.30,428.8 261.60,431.0 261.90,435.4 262.20,431.5 262.50,421.4 262.80,418.7 263.10,424.9 263.40,430.3 263.70,424.0 264.00,422.4 264.30,432.1 264.60,431.3 264.90,429.7 265.20,422.2 265.50,437.7 265.80,417.1 266.10,428.3 266.40,439.2 266.70,429.3 267.00,431.1 267.30,424.9 267.60,436.1 267.90,424.5 268.20,431.3 268.50,430.8 268.80,425.6 269.10,434.2 269.40,424.1 269.70,427.4 270.00,430.3 270.30,428.6 270.60,432.5 270.90,434.6 271.20,429.3 271.50,428.2 271.80,428.3 272.10,429.0 272.40,434.3 272.70,429.8 273.00,432.6 273.30,430.4 273.60,427.1 273.90,434.7 274.20,426.3 274.50,431.0 274.80,437.5 275.10,426.2 275.40,430.8 275.70,424.1 276.00,428.9 276.30,424.6 276.60,429.6 276.90,433.1 277.20,431.8 277.50,438.3 277.80,432.6 278.10,434.3 278.40,431.2 278.70,430.4 279.00,427.8 279.30,423.6 279.60,431.9 279.90,438.8 280.20,433.7 280.50,429.3 280.80,439.0 281.10,429.8 281.40,429.0 281.70,426.5 282.00,427.6 282.30,430.8 282.60,440.7 282.90,431.0 283.20,427.4 283.50,429.4 283.80,431.1 284.10,424.6 284.40,432.7 284.70,435.2 285.00,433.6 285.30,434.9 285.60,426.1 285.90,424.8 286.20,438.0 286.50,432.5 286.80,425.6 287.10,433.4 287.40,432.6 287.70,434.9 288.00,433.5 288.30,430.4 288.60,433.5 288.90,433.4 289.20,432.5 289.50,424.6 289.80,419.6 290.10,429.3 290.40,425.7 290.70,434.0 291.00,436.1 291.30,434.1 291.60,431.4 291.90,433.3 292.20,438.2 292.50,429.9 292.80,437.2 293.10,436.3 293.40,434.4 293.70,439.6 294.00,430.1 294.30,439.6 294.60,429.3 294.90,430.0 295.20,428.8 295.50,435.4 295.80,429.4 296.10,433.8 296.40,428.6 296.70,438.3 297.00,441.7 297.30,434.7 297.60,440.9 297.90,436.2 298.20,443.3 298.50,434.3 298.80,426.9 299.10,440.5 299.40,438.5 299.70,429.4" stroke="#1a88c4"/>
  <polyline points="52.00,308.5 52.30,308.3 52.60,303.8 52.90,294.2 53.20,301.6 53.50,297.2 53.80,290.5 54.10,293.1 54.40,289.8 54.70,287.1 55.00,283.6 55.30,283.6 55.60,275.6 55.90,275.7 56.20,272.0 56.50,274.4 56.80,271.6 57.10,265.8 57.40,261.3 57.70,261.2 58.00,260.0 58.30,255.8 58.60,259.7 58.90,255.4 59.20,236.1 59.50,236.7 59.80,241.2 60.10,237.1 60.40,236.9 60.70,234.0 61.00,239.3 61.30,222.1 61.60,222.3 61.90,230.0 62.20,220.8 62.50,217.9 62.80,209.7 63.10,201.7 63.40,206.7 63.70,203.5 64.00,194.6 64.30,194.5 64.60,194.7 64.90,188.3 65.20,189.6 65.50,187.9 65.80,185.2 66.10,180.3 66.40,182.6 66.70,181.4 67.00,176.4 67.30,168.9 67.60,173.2 67.90,165.3 68.20,168.9 68.50,157.8 68.80,164.0 69.10,157.4 69.40,149.5 69.70,156.7 70.00,150.2 70.30,149.9 70.60,143.0 70.90,141.2 71.20,145.6 71.50,141.3 71.80,143.1 72.10,144.1 72.40,132.2 72.70,139.2 73.00,142.2 73.30,134.2 73.60,130.6 73.90,136.1 74.20,132.6 74.50,134.1 74.80,127.4 75.10,121.8 75.40,128.6 75.70,128.0 76.00,134.2 76.30,132.5 76.60,125.3 76.90,128.1 77.20,138.0 77.50,138.0 77.80,133.0 78.10,136.7 78.40,139.5 78.70,140.4 79.00,143.1 79.30,141.2 79.60,140.5 79.90,140.6 80.20,147.7 80.50,134.8 80.80,145.7 81.10,148.1 81.40,143.3 81.70,152.6 82.00,149.9 82.30,158.2 82.60,155.4 82.90,160.5 83.20,164.6 83.50,162.5 83.80,158.6 84.10,157.4 84.40,173.4 84.70,166.8 85.00,165.8 85.30,171.1 85.60,171.3 85.90,177.5 86.20,175.5 86.50,177.0 86.80,175.4 87.10,182.2 87.40,177.2 87.70,186.3 88.00,191.7 88.30,179.7 88.60,176.9 88.90,191.8 89.20,201.7 89.50,187.5 89.80,187.7 90.10,197.2 90.40,192.3 90.70,195.1 91.00,197.2 91.30,202.5 91.60,199.7 91.90,204.1 92.20,203.5 92.50,201.9 92.80,205.6 93.10,204.2 93.40,209.8 93.70,206.2 94.00,207.7 94.30,220.3 94.60,215.0 94.90,216.4 95.20,220.3 95.50,217.5 95.80,219.7 96.10,224.0 96.40,224.7 96.70,219.8 97.00,229.9 97.30,225.0 97.60,224.4 97.90,226.4 98.20,230.0 98.50,240.3 98.80,231.1 99.10,236.6 99.40,227.8 99.70,238.6 100.00,244.0 100.30,240.0 100.60,239.2 100.90,244.0 101.20,247.1 101.50,247.9 101.80,254.7 102.10,247.9 102.40,245.4 102.70,248.4 103.00,249.7 103.30,251.5 103.60,251.9 103.90,253.8 104.20,246.6 104.50,258.7 104.80,253.5 105.10,251.8 105.40,260.8 105.70,264.8 106.00,262.2 106.30,267.3 106.60,257.9 106.90,275.6 107.20,267.9 107.50,260.0 107.80,262.6 108.10,267.4 108.40,261.2 108.70,269.7 109.00,268.0 109.30,276.4 109.60,276.2 109.90,261.1 110.20,274.2 110.50,267.9 110.80,280.9 111.10,277.7 111.40,280.4 111.70,274.3 112.00,288.0 112.30,289.9 112.60,277.3 112.90,284.6 113.20,281.0 113.50,284.9 113.80,280.4 114.10,295.2 114.40,283.7 114.70,287.7 115.00,292.2 115.30,287.9 115.60,290.3 115.90,289.6 116.20,292.2 116.50,288.3 116.80,292.3 117.10,294.0 117.40,294.1 117.70,296.5 118.00,295.7 118.30,301.0 118.60,297.0 118.90,298.5 119.20,296.9 119.50,298.2 119.80,295.6 120.10,304.2 120.40,297.6 120.70,300.0 121.00,305.6 121.30,306.5 121.60,303.6 121.90,297.2 122.20,308.7 122.50,308.6 122.80,302.0 123.10,312.3 123.40,306.5 123.70,305.3 124.00,311.4 124.30,310.9 124.60,313.3 124.90,306.0 125.20,321.8 125.50,311.8 125.80,308.4 126.10,318.6 126.40,315.0 126.70,318.7 127.00,316.5 127.30,318.4 127.60,320.5 127.90,316.8 128.20,323.8 128.50,319.4 128.80,318.4 129.10,323.2 129.40,325.6 129.70,323.3 130.00,321.2 130.30,328.2 130.60,318.2 130.90,321.8 131.20,327.0 131.50,321.3 131.80,327.8 132.10,327.9 132.40,332.6 132.70,325.0 133.00,326.7 133.30,331.4 133.60,319.6 133.90,344.5 134.20,328.2 134.50,328.5 134.80,336.0 135.10,332.5 135.40,325.3 135.70,336.3 136.00,337.8 136.30,332.5 136.60,333.7 136.90,337.5 137.20,331.8 137.50,338.2 137.80,337.6 138.10,334.2 138.40,331.5 138.70,337.1 139.00,334.6 139.30,343.4 139.60,340.0 139.90,343.3 140.20,340.9 140.50,341.9 140.80,337.8 141.10,344.6 141.40,350.0 141.70,341.2 142.00,340.4 142.30,342.8 142.60,341.8 142.90,341.3 143.20,345.4 143.50,344.0 143.80,352.0 144.10,346.2 144.40,348.0 144.70,351.2 145.00,346.2 145.30,354.3 145.60,345.6 145.90,345.3 146.20,347.7 146.50,349.2 146.80,344.0 147.10,350.5 147.40,343.8 147.70,357.7 148.00,351.5 148.30,349.6 148.60,348.9 148.90,351.7 149.20,352.8 149.50,349.7 149.80,350.7 150.10,354.3 150.40,353.2 150.70,359.9 151.00,362.7 151.30,356.6 151.60,358.9 151.90,351.3 152.20,360.3 152.50,357.7 152.80,360.4 153.10,365.6 153.40,348.9 153.70,360.4 154.00,354.8 154.30,362.6 154.60,354.5 154.90,358.5 155.20,361.9 155.50,364.0 155.80,362.0 156.10,358.5 156.40,359.9 156.70,366.6 157.00,363.0 157.30,356.0 157.60,367.5 157.90,365.9 158.20,368.3 158.50,363.3 158.80,368.8 159.10,360.8 159.40,368.3 159.70,364.0 160.00,369.5 160.30,371.3 160.60,364.0 160.90,367.3 161.20,368.1 161.50,373.5 161.80,371.7 162.10,363.6 162.40,371.3 162.70,372.9 163.00,379.3 163.30,362.9 163.60,368.3 163.90,376.9 164.20,365.4 164.50,366.4 164.80,374.3 165.10,376.1 165.40,369.8 165.70,375.4 166.00,373.9 166.30,380.4 166.60,374.1 166.90,378.8 167.20,370.8 167.50,374.3 167.80,375.0 168.10,380.8 168.40,378.7 168.70,373.2 169.00,379.9 169.30,380.6 169.60,377.5 169.90,376.8 170.20,377.3 170.50,371.0 170.80,379.5 171.10,380.0 171.40,375.4 171.70,382.7 172.00,373.7 172.30,377.6 172.60,378.2 172.90,389.2 173.20,373.7 173.50,383.5 173.80,383.4 174.10,383.2 174.40,385.0 174.70,377.6 175.00,372.3 175.30,386.0 175.60,377.6 175.90,381.7 176.20,378.2 176.50,388.2 176.80,387.7 177.10,381.0 177.40,388.4 177.70,385.2 178.00,384.3 178.30,385.4 178.60,384.5 178.90,388.4 179.20,387.3 179.50,384.7 179.80,390.9 180.10,384.0 180.40,392.0 180.70,389.1 181.00,394.0 181.30,390.2 181.60,395.7 181.90,389.1 182.20,387.7 182.50,385.8 182.80,391.6 183.10,389.5 183.40,384.7 183.70,384.9 184.00,387.6 184.30,387.4 184.60,394.4 184.90,396.9 185.20,394.9 185.50,393.0 185.80,389.8 186.10,392.1 186.40,396.1 186.70,401.8 187.00,396.7 187.30,391.7 187.60,393.4 187.90,391.3 188.20,390.3 188.50,393.2 188.80,395.1 189.10,402.6 189.40,395.0 189.70,401.0 190.00,403.0 190.30,395.9 190.60,402.9 190.90,399.2 191.20,394.5 191.50,397.7 191.80,396.9 192.10,396.0 192.40,396.3 192.70,398.0 193.00,399.4 193.30,393.8 193.60,397.8 193.90,391.3 194.20,399.3 194.50,401.1 194.80,399.2 195.10,399.9 195.40,401.4 195.70,396.1 196.00,398.1 196.30,401.6 196.60,403.9 196.90,401.4 197.20,411.0 197.50,399.5 197.80,404.5 198.10,405.8 198.40,402.6 198.70,397.0 199.00,395.5 199.30,401.6 199.60,406.0 199.90,402.4 200.20,402.2 200.50,399.9 200.80,395.2 201.10,392.5 201.40,403.1 201.70,402.3 202.00,396.3 202.30,412.1 202.60,396.6 202.90,398.1 203.20,397.7 203.50,408.0 203.80,399.4 204.10,406.4 204.40,406.2 204.70,404.9 205.00,398.2 205.30,401.4 205.60,411.6 205.90,398.8 206.20,402.3 206.50,404.1 206.80,408.5 207.10,406.2 207.40,408.5 207.70,400.7 208.00,409.7 208.30,408.2 208.60,398.9 208.90,412.8 209.20,416.3 209.50,403.0 209.80,406.8 210.10,412.8 210.40,400.3 210.70,398.3 211.00,401.5 211.30,404.8 211.60,405.0 211.90,410.3 212.20,396.8 212.50,402.5 212.80,410.6 213.10,416.5 213.40,413.7 213.70,413.0 214.00,408.9 214.30,413.3 214.60,404.9 214.90,412.6 215.20,409.0 215.50,414.6 215.80,411.8 216.10,405.1 216.40,410.6 216.70,415.6 217.00,405.4 217.30,408.1 217.60,407.3 217.90,404.3 218.20,415.3 218.50,417.0 218.80,414.9 219.10,412.6 219.40,411.4 219.70,412.9 220.00,408.8 220.30,416.1 220.60,416.8 220.90,416.5 221.20,410.1 221.50,412.9 221.80,412.0 222.10,420.7 222.40,413.8 222.70,404.8 223.00,415.0 223.30,421.6 223.60,416.5 223.90,417.4 224.20,413.8 224.50,405.1 224.80,406.0 225.10,408.6 225.40,413.6 225.70,415.6 226.00,417.4 226.30,413.0 226.60,418.9 226.90,413.5 227.20,411.8 227.50,418.7 227.80,411.1 228.10,403.2 228.40,410.7 228.70,415.9 229.00,402.0 229.30,414.1 229.60,414.4 229.90,409.7 230.20,409.6 230.50,414.2 230.80,413.9 231.10,422.0 231.40,418.2 231.70,409.7 232.00,413.0 232.30,420.0 232.60,425.4 232.90,418.9 233.20,418.6 233.50,425.6 233.80,417.4 234.10,410.5 234.40,411.5 234.70,415.6 235.00,427.6 235.30,411.9 235.60,418.3 235.90,412.2 236.20,419.0 236.50,422.5 236.80,417.6 237.10,425.0 237.40,422.1 237.70,421.0 238.00,426.8 238.30,422.7 238.60,418.1 238.90,416.6 239.20,416.0 239.50,421.9 239.80,418.5 240.10,432.0 240.40,428.3 240.70,419.3 241.00,419.0 241.30,428.0 241.60,412.4 241.90,418.8 242.20,425.1 242.50,417.0 242.80,419.0 243.10,419.7 243.40,424.3 243.70,422.1 244.00,423.4 244.30,424.3 244.60,422.0 244.90,426.8 245.20,418.9 245.50,415.9 245.80,414.5 246.10,415.3 246.40,420.1 246.70,427.2 247.00,423.6 247.30,420.3 247.60,418.3 247.90,420.8 248.20,421.5 248.50,420.9 248.80,417.2 249.10,421.5 249.40,428.2 249.70,414.3 250.00,422.9 250.30,414.8 250.60,425.0 250.90,421.0 251.20,415.3 251.50,425.0 251.80,432.6 252.10,425.2 252.40,430.0 252.70,424.7 253.00,415.6 253.30,427.3 253.60,423.5 253.90,419.5 254.20,429.0 254.50,426.9 254.80,417.6 255.10,429.7 255.40,422.1 255.70,428.9 256.00,422.0 256.30,428.6 256.60,421.5 256.90,433.0 257.20,427.7 257.50,433.0 257.80,423.2 258.10,424.8 258.40,430.7 258.70,415.1 259.00,422.5 259.30,431.9 259.60,429.5 259.90,431.9 260.20,426.3 260.50,430.3 260.80,424.7 261.10,422.0 261.40,420.6 261.70,425.8 262.00,425.9 262.30,425.7 262.60,412.9 262.90,419.9 263.20,426.4 263.50,430.1 263.80,426.4 264.10,425.2 264.40,419.0 264.70,434.9 265.00,424.6 265.30,436.9 265.60,436.2 265.90,430.9 266.20,427.3 266.50,430.5 266.80,425.0 267.10,431.3 267.40,430.3 267.70,432.7 268.00,434.7 268.30,438.2 268.60,429.0 268.90,435.4 269.20,427.4 269.50,427.1 269.80,428.4 270.10,426.9 270.40,435.7 270.70,435.5 271.00,437.2 271.30,431.6 271.60,433.0 271.90,433.8 272.20,426.9 272.50,434.1 272.80,433.4 273.10,427.4 273.40,435.0 273.70,424.9 274.00,431.9 274.30,430.0 274.60,430.5 274.90,428.2 275.20,437.3 275.50,435.7 275.80,438.6 276.10,434.1 276.40,427.9 276.70,432.1 277.00,428.6 277.30,436.0 277.60,439.4 277.90,435.7 278.20,431.7 278.50,432.9 278.80,436.6 279.10,428.4 279.40,435.5 279.70,435.9 280.00,432.7 280.30,433.4 280.60,436.1 280.90,431.9 281.20,432.0 281.50,439.2 281.80,436.9 282.10,443.4 282.40,431.8 282.70,428.5 283.00,440.6 283.30,440.8 283.60,433.4 283.90,430.3 284.20,436.7 284.50,429.4 284.80,435.7 285.10,427.7 285.40,436.4 285.70,428.2 286.00,436.7 286.30,444.5 286.60,436.8 286.90,441.5 287.20,435.4 287.50,434.4 287.80,431.9 288.10,443.2 288.40,438.5 288.70,446.0 289.00,433.8 289.30,438.1 289.60,439.6 289.90,445.6 290.20,447.5 290.50,436.8 290.80,434.8 291.10,432.2 291.40,445.9 291.70,439.7 292.00,437.4 292.30,440.2 292.60,429.3 292.90,433.1 293.20,444.9 293.50,442.7 293.80,441.7 294.10,436.8 294.40,443.9 294.70,449.3 295.00,436.2 295.30,441.8 295.60,439.9 295.90,443.5 296.20,442.2 296.50,441.6 296.80,438.5 297.10,442.4 297.40,439.9 297.70,442.1 298.00,442.6 298.30,445.9 298.60,440.6 298.90,441.9 299.20,448.1 299.50,442.6 299.80,442.5" stroke="#c8102c"/>
  <polyline points="51.00,434.8 51.30,427.3 51.60,423.4 51.90,410.1 52.20,424.3 52.50,417.0 52.80,406.2 53.10,406.6 53.40,400.0 53.70,392.0 54.00,394.3 54.30,383.4 54.60,378.1 54.90,370.8 55.20,371.0 55.50,363.3 55.80,360.9 56.10,350.6 56.40,348.6 56.70,338.8 57.00,341.2 57.30,333.1 57.60,328.5 57.90,323.6 58.20,313.2 58.50,317.6 58.80,319.7 59.10,300.0 59.40,296.1 59.70,293.5 60.00,300.4 60.30,293.7 60.60,294.4 60.90,289.3 61.20,283.6 61.50,280.4 61.80,274.9 62.10,276.0 62.40,263.7 62.70,263.3 63.00,262.7 63.30,266.1 63.60,251.3 63.90,246.4 64.20,246.2 64.50,250.9 64.80,243.6 65.10,248.5 65.40,232.4 65.70,243.6 66.00,241.2 66.30,228.4 66.60,233.3 66.90,236.0 67.20,229.1 67.50,231.1 67.80,235.1 68.10,223.9 68.40,219.4 68.70,215.3 69.00,219.5 69.30,213.8 69.60,211.9 69.90,210.2 70.20,212.2 70.50,203.7 70.80,200.8 71.10,195.8 71.40,210.9 71.70,205.0 72.00,208.2 72.30,202.7 72.60,198.6 72.90,203.0 73.20,199.6 73.50,193.5 73.80,194.2 74.10,204.9 74.40,197.7 74.70,197.1 75.00,193.1 75.30,190.3 75.60,196.3 75.90,191.0 76.20,187.2 76.50,189.0 76.80,184.6 77.10,189.1 77.40,193.9 77.70,186.0 78.00,196.7 78.30,188.2 78.60,192.6 78.90,188.9 79.20,192.4 79.50,194.3 79.80,192.9 80.10,192.4 80.40,193.3 80.70,193.4 81.00,190.8 81.30,197.3 81.60,200.9 81.90,203.9 82.20,203.5 82.50,212.2 82.80,203.5 83.10,200.8 83.40,211.8 83.70,199.7 84.00,209.3 84.30,201.8 84.60,208.6 84.90,199.4 85.20,213.1 85.50,209.5 85.80,206.9 86.10,219.6 86.40,216.6 86.70,214.5 87.00,212.0 87.30,216.2 87.60,216.7 87.90,221.6 88.20,222.9 88.50,217.5 88.80,219.1 89.10,220.2 89.40,217.6 89.70,222.0 90.00,225.2 90.30,229.7 90.60,233.5 90.90,225.2 91.20,232.2 91.50,228.8 91.80,240.9 92.10,232.6 92.40,236.1 92.70,230.8 93.00,232.4 93.30,244.4 93.60,236.3 93.90,240.6 94.20,233.2 94.50,244.0 94.80,238.2 95.10,250.7 95.40,242.9 95.70,250.0 96.00,240.1 96.30,249.2 96.60,244.4 96.90,247.2 97.20,250.5 97.50,250.0 97.80,253.6 98.10,256.8 98.40,257.4 98.70,255.1 99.00,250.6 99.30,254.1 99.60,257.8 99.90,250.3 100.20,264.0 100.50,260.8 100.80,261.8 101.10,268.2 101.40,268.1 101.70,267.2 102.00,262.9 102.30,269.8 102.60,271.1 102.90,266.7 103.20,276.3 103.50,275.1 103.80,265.3 104.10,275.6 104.40,270.6 104.70,282.2 105.00,281.9 105.30,274.6 105.60,276.6 105.90,282.1 106.20,281.7 106.50,290.5 106.80,288.3 107.10,284.8 107.40,289.7 107.70,279.3 108.00,290.7 108.30,294.2 108.60,290.7 108.90,289.5 109.20,296.2 109.50,303.5 109.80,296.8 110.10,292.1 110.40,304.5 110.70,291.0 111.00,302.5 111.30,298.9 111.60,306.6 111.90,299.9 112.20,310.6 112.50,307.2 112.80,299.3 113.10,299.3 113.40,307.7 113.70,315.9 114.00,309.3 114.30,312.7 114.60,312.5 114.90,317.9 115.20,317.2 115.50,317.5 115.80,312.7 116.10,323.0 116.40,324.5 116.70,313.5 117.00,330.1 117.30,323.9 117.60,319.4 117.90,313.9 118.20,325.9 118.50,326.2 118.80,321.9 119.10,317.4 119.40,330.9 119.70,324.0 120.00,325.4 120.30,340.8 120.60,338.4 120.90,333.9 121.20,328.5 121.50,334.1 121.80,322.0 122.10,333.2 122.40,330.2 122.70,328.6 123.00,325.9 123.30,338.1 123.60,330.9 123.90,338.0 124.20,341.7 124.50,335.0 124.80,334.1 125.10,332.4 125.40,339.5 125.70,345.1 126.00,341.8 126.30,346.1 126.60,338.8 126.90,342.7 127.20,342.1 127.50,340.8 127.80,355.2 128.10,351.5 128.40,345.1 128.70,345.9 129.00,349.7 129.30,344.4 129.60,353.4 129.90,346.6 130.20,351.4 130.50,349.2 130.80,352.4 131.10,349.4 131.40,349.1 131.70,352.5 132.00,354.5 132.30,357.0 132.60,359.3 132.90,366.5 133.20,364.1 133.50,360.1 133.80,365.2 134.10,359.7 134.40,369.9 134.70,366.7 135.00,359.0 135.30,368.8 135.60,369.6 135.90,354.7 136.20,363.7 136.50,365.4 136.80,359.5 137.10,363.8 137.40,364.8 137.70,371.7 138.00,371.3 138.30,382.0 138.60,369.2 138.90,376.5 139.20,372.3 139.50,373.6 139.80,367.8 140.10,353.5 140.40,370.5 140.70,377.8 141.00,381.9 141.30,378.1 141.60,378.1 141.90,372.7 142.20,383.6 142.50,383.3 142.80,375.5 143.10,378.2 143.40,374.5 143.70,385.8 144.00,381.6 144.30,379.9 144.60,382.6 144.90,383.3 145.20,380.0 145.50,376.9 145.80,377.2 146.10,375.7 146.40,385.8 146.70,394.1 147.00,377.3 147.30,385.9 147.60,387.6 147.90,382.0 148.20,387.7 148.50,382.4 148.80,393.1 149.10,385.7 149.40,389.2 149.70,392.3 150.00,387.9 150.30,387.1 150.60,388.4 150.90,394.6 151.20,391.4 151.50,393.2 151.80,388.0 152.10,393.8 152.40,396.9 152.70,394.4 153.00,403.1 153.30,394.3 153.60,391.1 153.90,389.1 154.20,401.7 154.50,397.2 154.80,402.1 155.10,400.1 155.40,405.6 155.70,404.3 156.00,397.4 156.30,400.6 156.60,404.5 156.90,394.7 157.20,406.8 157.50,406.1 157.80,405.4 158.10,400.5 158.40,403.1 158.70,397.2 159.00,402.7 159.30,400.1 159.60,403.4 159.90,401.2 160.20,409.1 160.50,409.2 160.80,398.6 161.10,408.8 161.40,396.3 161.70,395.9 162.00,405.2 162.30,406.1 162.60,408.3 162.90,399.4 163.20,406.8 163.50,407.9 163.80,413.2 164.10,407.6 164.40,410.7 164.70,404.4 165.00,408.2 165.30,407.4 165.60,412.8 165.90,405.6 166.20,406.6 166.50,413.2 166.80,418.9 167.10,413.0 167.40,413.0 167.70,410.4 168.00,417.1 168.30,415.0 168.60,420.6 168.90,414.7 169.20,409.4 169.50,411.4 169.80,409.9 170.10,409.1 170.40,420.5 170.70,418.8 171.00,410.1 171.30,423.8 171.60,417.3 171.90,412.4 172.20,418.6 172.50,416.9 172.80,414.2 173.10,409.4 173.40,418.4 173.70,419.9 174.00,407.6 174.30,421.7 174.60,422.3 174.90,409.5 175.20,420.7 175.50,419.2 175.80,417.1 176.10,419.5 176.40,427.3 176.70,415.2 177.00,419.8 177.30,423.0 177.60,419.3 177.90,420.8 178.20,416.8 178.50,419.5 178.80,423.6 179.10,425.3 179.40,420.2 179.70,437.9 180.00,422.2 180.30,425.5 180.60,424.3 180.90,423.8 181.20,431.6 181.50,424.0 181.80,432.3 182.10,431.7 182.40,422.4 182.70,431.8 183.00,424.7 183.30,439.9 183.60,426.4 183.90,424.2 184.20,420.3 184.50,423.3 184.80,426.7 185.10,425.1 185.40,424.4 185.70,427.0 186.00,429.4 186.30,437.0 186.60,423.4 186.90,428.8 187.20,427.3 187.50,425.1 187.80,426.5 188.10,428.3 188.40,435.8 188.70,432.0 189.00,430.8 189.30,436.1 189.60,435.0 189.90,433.0 190.20,436.0 190.50,430.9 190.80,437.6 191.10,437.2 191.40,433.6 191.70,430.4 192.00,442.7 192.30,436.6 192.60,449.8 192.90,433.7 193.20,440.6 193.50,435.1 193.80,438.3 194.10,441.1 194.40,434.1 194.70,437.4 195.00,438.7 195.30,438.7 195.60,441.1 195.90,443.2 196.20,436.9 196.50,440.2 196.80,437.7 197.10,434.5 197.40,443.6 197.70,437.5 198.00,443.1 198.30,438.7 198.60,435.0 198.90,443.4 199.20,437.4 199.50,443.1 199.80,440.3 200.10,443.6 200.40,431.1 200.70,437.0 201.00,442.9 201.30,440.7 201.60,438.7 201.90,440.3 202.20,449.0 202.50,441.1 202.80,444.0 203.10,447.0 203.40,441.8 203.70,445.9 204.00,442.2 204.30,441.7 204.60,439.6 204.90,448.6 205.20,443.2 205.50,442.7 205.80,440.4 206.10,453.5 206.40,449.0 206.70,445.4 207.00,443.1 207.30,439.7 207.60,447.9 207.90,448.1 208.20,443.0 208.50,452.3 208.80,450.8 209.10,443.4 209.40,445.4 209.70,446.1 210.00,448.9 210.30,447.8 210.60,441.4 210.90,455.3 211.20,450.4 211.50,454.8 211.80,455.0 212.10,448.7 212.40,451.3 212.70,453.3 213.00,453.6 213.30,449.7 213.60,447.9 213.90,450.2 214.20,447.5 214.50,448.8 214.80,442.5 215.10,452.0 215.40,447.4 215.70,449.6 216.00,452.1 216.30,453.9 216.60,461.0 216.90,453.8 217.20,446.9 217.50,453.9 217.80,450.9 218.10,455.5 218.40,450.9 218.70,451.0 219.00,452.1 219.30,451.8 219.60,446.7 219.90,452.0 220.20,455.0 220.50,460.5 220.80,454.1 221.10,453.8 221.40,458.2 221.70,458.1 222.00,462.9 222.30,458.6 222.60,456.0 222.90,462.1 223.20,463.1 223.50,454.4 223.80,457.3 224.10,449.4 224.40,455.3 224.70,453.1 225.00,456.2 225.30,455.2 225.60,456.7 225.90,457.1 226.20,459.9 226.50,458.8 226.80,455.5 227.10,452.4 227.40,463.6 227.70,464.6 228.00,456.5 228.30,461.1 228.60,452.0 228.90,447.2 229.20,457.8 229.50,465.6 229.80,454.6 230.10,455.7 230.40,466.6 230.70,451.3 231.00,462.6 231.30,462.0 231.60,459.1 231.90,461.0 232.20,471.8 232.50,455.5 232.80,459.2 233.10,459.6 233.40,457.8 233.70,455.0 234.00,468.1 234.30,462.2 234.60,453.6 234.90,458.4 235.20,463.4 235.50,463.5 235.80,455.5 236.10,461.6 236.40,463.3 236.70,464.0 237.00,464.1 237.30,454.5 237.60,470.8 237.90,463.7 238.20,470.8 238.50,475.6 238.80,462.4 239.10,457.8 239.40,467.2 239.70,462.7 240.00,461.7 240.30,459.3 240.60,471.4 240.90,462.1 241.20,458.0 241.50,462.3 241.80,459.4 242.10,465.3 242.40,462.9 242.70,465.6 243.00,467.6 243.30,462.3 243.60,468.4 243.90,470.9 244.20,463.9 244.50,462.8 244.80,466.6 245.10,469.8 245.40,466.0 245.70,466.8 246.00,466.1 246.30,467.8 246.60,469.3 246.90,463.5 247.20,464.7 247.50,467.1 247.80,464.1 248.10,467.8 248.40,469.7 248.70,474.2 249.00,464.9 249.30,464.3 249.60,475.5 249.90,471.8 250.20,463.2 250.50,464.5 250.80,476.6 251.10,475.2 251.40,473.6 251.70,473.9 252.00,462.4 252.30,469.1 252.60,472.5 252.90,461.2 253.20,466.1 253.50,473.1 253.80,474.8 254.10,467.4 254.40,471.4 254.70,477.3 255.00,468.7 255.30,464.7 255.60,470.4 255.90,469.1 256.20,476.7 256.50,471.8 256.80,467.7 257.10,482.0 257.40,469.4 257.70,473.8 258.00,474.8 258.30,475.4 258.60,472.9 258.90,474.9 259.20,472.1 259.50,466.3 259.80,471.7 260.10,472.0 260.40,472.2 260.70,486.0 261.00,468.1 261.30,479.2 261.60,480.5 261.90,464.0 262.20,473.9 262.50,470.9 262.80,462.7 263.10,476.1 263.40,471.7 263.70,472.9 264.00,471.9 264.30,488.2 264.60,480.5 264.90,476.4 265.20,478.3 265.50,474.9 265.80,476.2 266.10,472.5 266.40,476.0 266.70,472.9 267.00,477.8 267.30,479.9 267.60,477.8 267.90,481.8 268.20,488.6 268.50,467.6 268.80,477.1 269.10,474.7 269.40,475.3 269.70,471.5 270.00,477.8 270.30,476.6 270.60,475.1 270.90,476.9 271.20,475.6 271.50,468.0 271.80,477.0 272.10,477.3 272.40,474.6 272.70,480.2 273.00,476.1 273.30,469.6 273.60,483.2 273.90,472.1 274.20,476.5 274.50,480.3 274.80,485.8 275.10,485.3 275.40,475.7 275.70,476.9 276.00,478.6 276.30,485.4 276.60,488.6 276.90,483.2 277.20,478.1 277.50,485.6 277.80,479.6 278.10,479.6 278.40,480.3 278.70,484.2 279.00,483.0 279.30,486.3 279.60,487.7 279.90,484.4 280.20,472.0 280.50,475.0 280.80,483.2 281.10,482.4 281.40,492.3 281.70,482.8 282.00,482.4 282.30,487.4 282.60,488.0 282.90,482.4 283.20,485.7 283.50,478.8 283.80,479.7 284.10,489.4 284.40,478.2 284.70,488.3 285.00,487.4 285.30,487.9 285.60,488.7 285.90,487.3 286.20,475.5 286.50,480.6 286.80,482.5 287.10,489.3 287.40,480.5 287.70,482.5 288.00,484.1 288.30,491.6 288.60,479.6 288.90,480.2 289.20,489.0 289.50,477.0 289.80,488.0 290.10,484.6 290.40,479.8 290.70,485.1 291.00,482.6 291.30,487.9 291.60,488.9 291.90,494.0 292.20,487.5 292.50,488.1 292.80,485.3 293.10,487.9 293.40,492.7 293.70,479.8 294.00,491.3 294.30,486.1 294.60,488.9 294.90,490.2 295.20,492.6 295.50,490.1 295.80,487.4 296.10,490.7 296.40,489.5 296.70,488.6 297.00,490.6 297.30,493.7 297.60,490.6 297.90,490.8 298.20,484.5 298.50,489.8 298.80,482.3 299.10,493.8 299.40,486.6 299.70,496.6" stroke="#7010cc"/>
 </g>
 <path d="M0 564.5H1128" stroke="#cfcfcf" stroke-width="1"/>
 <path d="M24.5 560v4M59.5 560v4M94.5 560v4M129.5 560v4M164.5 560v4M199.5 560v4M234.5 560v4M269.5 560v4" stroke="#cfcfcf"/>
 <path d="M0 170.5h5M0 249.5h5M0 327.5h5M0 406.5h5M0 484.5h5" stroke="#c8c8c8" stroke-width="1.3"/>
</svg>
<div class="t ylab" style="left:5px;top:165px;font-size:11.5px">2500</div>
<div class="t ylab" style="left:5px;top:244px;font-size:11.5px">2000</div>
<div class="t ylab" style="left:5px;top:322px;font-size:11.5px">1500</div>
<div class="t ylab" style="left:5px;top:401px;font-size:11.5px">1000</div>
<div class="t ylab" style="left:5px;top:479px;font-size:11.5px">500</div>
<div class="t ylab" style="left:21px;top:566px;font-size:11.5px">0</div>
<div class="t ylab" style="left:193px;top:566px;font-size:11.5px">10</div>

<!-- splitters & aux plots -->
<div class="a" style="left:0;top:585px;width:1128px;height:9px;background:linear-gradient(#9a9a9a,#b9b9b9 30%,#b0b0b0 70%,#8a8a8a)"></div>
<div class="a plot" style="left:0;top:594px;width:1128px;height:56px;background:#1c1c1c"></div>
<div class="a" style="left:0;top:650px;width:1128px;height:2px;background:#a8a8a8"></div>
<div class="a plot" style="left:0;top:652px;width:1128px;height:55px;background:#1c1c1c"></div>
<div class="a" style="left:0;top:707px;width:1128px;height:9px;background:linear-gradient(#9a9a9a,#b9b9b9 30%,#b0b0b0 70%,#8a8a8a)"></div>
<!-- AUX PLOT -->
<svg style="left:0;top:594px" width="1128" height="113" viewBox="0 594 1128 113">
 <polyline points="52.0,624.0 53.5,622.7 55.0,622.1 56.5,621.3 58.0,620.5 59.5,618.9 61.0,617.5 62.5,616.3 64.0,615.9 65.5,615.2 67.0,613.5 68.5,611.7 70.0,610.7 71.5,610.8 73.0,609.0 74.5,607.2 76.0,608.5 77.5,608.7 79.0,609.5 80.5,610.2 82.0,610.8 83.5,612.0 85.0,612.3 86.5,612.7 88.0,613.8 89.5,614.6 91.0,614.1 92.5,615.3 94.0,615.6 95.5,616.6 97.0,616.6 98.5,617.6 100.0,618.1 101.5,618.5 103.0,618.7 104.5,619.5 106.0,619.6 107.5,620.0 109.0,621.2 110.5,621.1 112.0,622.7 113.5,623.0 115.0,622.2 116.5,623.8 118.0,623.6 119.5,624.6 121.0,625.0 122.5,624.3 124.0,625.3 125.5,625.6 127.0,626.3 128.5,625.6 130.0,626.7 131.5,626.1 133.0,626.7 134.5,626.7 136.0,628.0 137.5,627.8 139.0,628.9 140.5,628.3 142.0,628.7 143.5,628.9 145.0,628.4 146.5,628.8 148.0,629.6 149.5,629.0 151.0,629.4 152.5,629.4 154.0,629.8 155.5,629.5 157.0,629.8 158.5,630.1 160.0,630.2 161.5,629.9 163.0,630.8 164.5,630.0 166.0,630.2 167.5,630.3 169.0,631.4 170.5,631.0 172.0,630.9 173.5,630.9 175.0,631.8 176.5,631.3 178.0,631.3 179.5,632.3 181.0,631.6 182.5,632.2 184.0,632.5 185.5,632.4 187.0,632.7 188.5,633.5 190.0,632.8 191.5,632.6 193.0,632.5 194.5,633.4 196.0,633.5 197.5,633.9 199.0,633.7 200.5,633.8 202.0,633.8 203.5,633.9 205.0,634.3 206.5,634.2 208.0,634.4 209.5,635.3 211.0,634.8 212.5,633.9 214.0,635.5 215.5,634.9 217.0,634.4 218.5,635.3 220.0,635.0 221.5,634.8 223.0,634.9 224.5,634.8 226.0,635.3 227.5,635.9 229.0,635.3 230.5,635.7 232.0,636.4 233.5,635.1 235.0,635.9 236.5,635.7 238.0,635.4 239.5,635.5 241.0,636.0 242.5,636.3 244.0,636.0 245.5,636.3 247.0,636.7 248.5,636.6 250.0,636.9 251.5,636.8 253.0,636.8 254.5,637.5 256.0,637.0 257.5,636.9 259.0,637.2 260.5,636.5 262.0,636.9 263.5,637.4 265.0,637.4 266.5,637.9 268.0,637.3 269.5,636.7 271.0,638.3 272.5,637.9 274.0,637.0 275.5,638.2 277.0,637.6 278.5,636.9 280.0,637.6 281.5,637.6 283.0,638.6 284.5,637.6 286.0,637.9 287.5,638.0 289.0,638.0 290.5,637.8 292.0,638.4 293.5,638.8 295.0,638.7 296.5,638.0 298.0,638.0 299.5,638.6 301.0,638.3 302.5,638.4 304.0,637.9 305.5,639.6 307.0,639.1 308.5,638.3 310.0,639.1 311.5,639.4 313.0,637.7 314.5,638.6 316.0,638.6 317.5,639.1 319.0,638.8 320.5,638.8 322.0,638.9 323.5,639.8 325.0,639.9 326.5,638.7 328.0,638.6 329.5,640.2 331.0,638.6 332.5,638.8 334.0,639.1 335.5,639.3 337.0,639.6 338.5,639.3 340.0,638.8 341.5,639.4 343.0,639.3 344.5,640.1 346.0,639.2 347.5,638.7 349.0,638.8 350.5,639.9 352.0,639.1 353.5,638.4 355.0,639.1 356.5,639.4 358.0,639.9 359.5,639.0 361.0,639.7 362.5,639.8 364.0,639.2 365.5,639.4 367.0,640.3 368.5,640.3 370.0,639.9 371.5,639.7 373.0,640.1 374.5,639.6 376.0,639.6 377.5,639.3 379.0,639.7 380.5,639.7 382.0,641.0 383.5,639.7 385.0,640.3 386.5,640.4 388.0,639.7 389.5,640.4 391.0,638.9 392.5,639.9 394.0,640.3 395.5,638.8 397.0,639.4 398.5,640.4 400.0,639.9 401.5,639.5 403.0,639.8 404.5,639.8 406.0,640.4 407.5,640.3 409.0,640.0 410.5,639.8 412.0,640.1 413.5,640.8 415.0,640.3 416.5,640.5 418.0,640.2 419.5,639.7 421.0,639.9 422.5,640.6 424.0,640.4 425.5,639.9 427.0,639.6 428.5,640.4 430.0,640.2 431.5,640.3 433.0,640.3 434.5,640.6 436.0,640.6 437.5,640.9 439.0,640.9 440.5,641.1 442.0,640.9 443.5,640.4 445.0,640.6 446.5,640.8 448.0,640.5 449.5,640.9 451.0,641.2 452.5,640.3 454.0,639.9 455.5,641.3 457.0,640.8 458.5,641.1 460.0,640.2 461.5,641.6 463.0,641.2 464.5,640.8 466.0,640.7 467.5,641.0 469.0,640.9 470.5,640.8 472.0,640.5 473.5,641.6 475.0,641.0 476.5,641.1 478.0,641.1 479.5,640.0 481.0,641.3 482.5,641.0 484.0,641.0 485.5,641.2 487.0,640.7 488.5,641.6 490.0,640.9 491.5,640.8 493.0,640.9 494.5,641.3 496.0,641.6 497.5,641.1 499.0,640.7 500.5,641.8 502.0,640.9 503.5,641.9 505.0,641.4 506.5,641.1 508.0,641.2 509.5,641.7 511.0,641.9 512.5,641.4 514.0,642.0 515.5,642.5 517.0,641.5 518.5,641.1 520.0,641.2 521.5,641.0 523.0,641.4 524.5,641.4 526.0,641.1 527.5,642.0 529.0,640.6 530.5,641.2 532.0,642.7 533.5,642.3 535.0,642.1 536.5,642.1 538.0,642.7 539.5,642.1 541.0,642.0 542.5,641.4 544.0,641.9 545.5,641.6 547.0,641.7 548.5,641.7 550.0,642.0 551.5,641.9 553.0,642.5 554.5,641.5 556.0,642.0 557.5,643.0 559.0,642.2 560.5,642.7 562.0,642.7 563.5,642.8 565.0,642.6 566.5,641.6 568.0,642.2 569.5,642.1 571.0,641.6 572.5,642.1 574.0,641.8 575.5,641.6 577.0,642.5 578.5,642.4 580.0,642.1 581.5,642.0 583.0,642.3 584.5,642.3 586.0,642.4 587.5,642.5 589.0,642.4 590.5,642.8 592.0,642.9 593.5,642.8 595.0,642.4 596.5,642.4 598.0,642.9 599.5,642.6 601.0,642.7 602.5,641.6 604.0,641.6 605.5,643.0 607.0,643.0 608.5,643.5 610.0,643.2 611.5,643.0 613.0,642.9 614.5,642.3 616.0,643.3 617.5,642.7 619.0,643.2 620.5,643.1 622.0,643.2 623.5,643.5 625.0,642.9 626.5,642.9 628.0,642.7 629.5,643.0 631.0,643.9 632.5,643.0 634.0,643.7 635.5,643.6 637.0,643.6 638.5,643.6 640.0,642.8 641.5,643.5 643.0,644.0 644.5,643.0 646.0,643.3 647.5,643.1 649.0,643.5 650.5,642.9 652.0,644.2 653.5,643.3 655.0,642.8 656.5,644.3 658.0,644.0 659.5,643.8 661.0,643.8 662.5,643.4 664.0,643.5 665.5,644.0 667.0,644.1 668.5,644.1 670.0,643.8 671.5,643.5 673.0,643.6 674.5,644.3 676.0,644.4 677.5,643.6 679.0,643.6 680.5,644.4 682.0,644.2 683.5,644.2 685.0,643.3 686.5,643.8 688.0,643.7 689.5,644.1 691.0,643.2 692.5,644.6 694.0,644.2 695.5,644.2 697.0,643.5 698.5,644.1 700.0,644.7 701.5,643.4 703.0,644.3 704.5,644.5 706.0,643.9 707.5,644.6 709.0,644.1 710.5,644.8 712.0,644.5 713.5,644.4 715.0,645.2 716.5,644.7 718.0,644.9 719.5,643.8 721.0,644.1 722.5,644.8 724.0,644.8 725.5,644.4 727.0,644.8 728.5,644.0 730.0,644.6 731.5,644.0 733.0,644.7 734.5,644.4 736.0,644.3 737.5,644.6 739.0,645.5 740.5,644.2 742.0,644.4 743.5,645.2 745.0,644.5 746.5,645.5 748.0,644.9 749.5,644.8 751.0,645.0 752.5,645.6 754.0,645.1 755.5,645.1 757.0,645.0 758.5,644.2 760.0,644.5 761.5,645.6 763.0,645.3 764.5,645.2 766.0,645.3 767.5,644.8 769.0,645.2 770.5,644.7 772.0,645.3 773.5,644.8 775.0,645.0 776.5,645.4 778.0,645.0 779.5,645.5 781.0,645.4 782.5,645.4 784.0,645.9 785.5,644.6 787.0,644.6 788.5,645.6 790.0,645.8 791.5,646.3 793.0,645.7 794.5,645.8 796.0,645.0 797.5,645.8 799.0,645.8 800.5,645.0 802.0,645.1 803.5,645.5 805.0,645.7 806.5,644.2 808.0,645.6 809.5,645.7 811.0,645.6 812.5,645.8 814.0,645.9 815.5,645.2 817.0,645.9 818.5,645.6 820.0,645.3 821.5,645.9 823.0,646.5 824.5,645.2 826.0,645.1 827.5,645.1 829.0,646.8 830.5,645.8 832.0,645.9 833.5,645.6 835.0,645.5 836.5,645.1 838.0,646.1 839.5,646.1 841.0,645.2 842.5,645.6 844.0,645.8 845.5,646.1 847.0,646.2 848.5,646.7 850.0,646.8 851.5,646.7 853.0,646.8 854.5,645.7 856.0,646.0 857.5,646.8 859.0,646.4 860.5,646.3 862.0,645.4 863.5,645.5 865.0,646.7 866.5,646.6 868.0,646.3 869.5,646.3 871.0,645.7 872.5,646.6 874.0,647.0 875.5,647.3 877.0,646.6 878.5,646.5 880.0,646.1 881.5,647.2 883.0,647.4 884.5,646.4 886.0,646.8 887.5,646.7 889.0,646.5 890.5,645.6 892.0,646.6 893.5,647.0 895.0,646.1 896.5,646.4 898.0,645.4 899.5,647.4 901.0,647.1 902.5,646.9 904.0,646.8 905.5,646.6 907.0,646.9 908.5,646.8 910.0,646.9 911.5,647.0 913.0,647.1 914.5,647.8 916.0,646.4 917.5,647.2 919.0,646.8 920.5,646.6 922.0,646.1 923.5,647.5 925.0,646.8 926.5,646.9 928.0,647.5 929.5,646.8 931.0,647.3 932.5,647.3 934.0,647.7 935.5,647.8 937.0,647.0 938.5,647.8 940.0,647.4 941.5,647.5 943.0,647.4 944.5,647.8 946.0,646.9 947.5,647.6 949.0,648.1 950.5,647.4 952.0,648.5 953.5,647.3 955.0,647.7 956.5,647.4 958.0,647.4 959.5,647.2 961.0,647.5 962.5,647.7 964.0,647.4 965.5,648.2 967.0,648.5 968.5,647.1 970.0,648.2 971.5,647.9 973.0,648.0 974.5,649.0 976.0,648.4 977.5,648.1 979.0,648.0 980.5,647.0 982.0,648.3 983.5,647.7 985.0,648.1 986.5,648.1 988.0,648.5 989.5,649.0 991.0,648.6 992.5,648.7 994.0,648.0 995.5,648.4 997.0,648.5 998.5,647.6 1000.0,649.2 1001.5,647.9 1003.0,647.7 1004.5,649.0 1006.0,649.3 1007.5,648.0 1009.0,648.1 1010.5,649.8 1012.0,648.5 1013.5,647.5 1015.0,648.2 1016.5,649.4 1018.0,648.8 1019.5,648.8 1021.0,649.1 1022.5,648.9 1024.0,648.4 1025.5,647.9 1027.0,648.8 1028.5,648.1 1030.0,648.6 1031.5,649.5 1033.0,648.9 1034.5,648.7 1036.0,648.8 1037.5,649.1 1039.0,649.2 1040.5,648.2 1042.0,648.9 1043.5,649.6 1045.0,649.2 1046.5,648.5 1048.0,648.6 1049.5,648.0 1051.0,648.6 1052.5,649.7 1054.0,648.9 1055.5,648.6 1057.0,648.8 1058.5,649.0 1060.0,649.0 1061.5,648.9 1063.0,648.8 1064.5,649.4 1066.0,649.8 1067.5,648.9 1069.0,648.9 1070.5,649.7 1072.0,648.6 1073.5,649.0 1075.0,649.1 1076.5,649.4 1078.0,649.2 1079.5,648.9 1081.0,649.5 1082.5,648.8 1084.0,648.6 1085.5,648.5 1087.0,649.8 1088.5,648.7 1090.0,649.7 1091.5,649.8 1093.0,649.9 1094.5,649.5 1096.0,649.3 1097.5,649.6 1099.0,649.3 1100.5,649.0 1102.0,650.2 1103.5,649.3 1105.0,650.5 1106.5,649.9 1108.0,649.5 1109.5,649.9 1111.0,650.3 1112.5,649.2 1114.0,649.4 1115.5,649.4 1117.0,649.9 1118.5,650.1 1120.0,649.9 1121.5,649.6 1123.0,649.7 1124.5,650.5 1126.0,650.5 1127.5,650.1" fill="none" stroke="#0c7a0c" stroke-width="1.6"/>
 <path d="M0 618.5h5M0 682.5h5" stroke="#c8c8c8" stroke-width="1.3"/>
 <path d="M6 682.5h3" stroke="#c8c8c8" stroke-width="1.3"/>
</svg>
<div class="t ylab" style="left:5px;top:613px;font-size:11.5px">2000</div>
<div class="t ylab" style="left:10px;top:677px;font-size:11.5px">2000</div>

<!-- console -->
<div class="a" style="left:0;top:715px;width:1116px;height:72px;background:#001e27"></div>
<div class="a" style="left:1117px;top:715px;width:11px;height:72px;background:#9a9a9a"></div>
<div class="a" style="left:1119px;top:718px;width:7px;height:66px;background:#5a5a5a;border-radius:4px"></div>
<div class="t" style="left:0;top:718px;font-size:13.5px;color:#808076">This window shows your <span style="color:#8c9a14">commands</span>.</div>
<div class="t" style="left:0;top:737px;font-size:13.5px;color:#2a6ea8">1&gt; # Fityk script. Fityk version: 1.3.1. Created: Tue Feb 13 10:27:03 2018</div>
<div class="t" style="left:0;top:756px;font-size:13.5px;color:#2a6ea8">3&gt; set verbosity = -1 #the rest of the file is not shown</div>
<div class="a" style="left:1px;top:789px;width:1110px;height:32px;background:#b3b3b3;border:1px solid #8c8c8c;border-radius:3px"></div>
<div class="a" style="left:1112px;top:789px;width:15px;height:32px;background:#b0b0b0;border:1px solid #8c8c8c;border-radius:2px"></div>
<svg style="left:1114px;top:796px" width="10" height="22"><path d="M1 5L5 1L9 5Z M1 16L9 16L5 20Z" fill="#555"/></svg>
<!-- status bar -->
<div class="a" style="left:710px;top:824px;width:1px;height:19px;background:#8e8e8e"></div>
<div class="a" style="left:1288px;top:823px;width:25px;height:21px;background:#adadad;border:1px solid #8a8a8a;border-radius:3px"></div>
<div class="a" style="left:1315px;top:822px;width:174px;height:1px;background:#959595"></div>
<div class="t" style="left:1359px;top:827px;font-size:14px;color:#262626">zoom</div>
<div class="t" style="left:1411px;top:827px;font-size:14px;color:#262626">menu</div>
<svg style="left:1395px;top:826px" width="14" height="18"><path d="M2 4C2 1 5 0 7 2" stroke="#333" stroke-width="1" fill="none"/><rect x="3.5" y="5.5" width="9" height="11" rx="4" fill="#b8b8b8" stroke="#444"/><path d="M8 6v4" stroke="#2a6ab0" stroke-width="1.5"/></svg>
<svg style="left:1293px;top:827px" width="16" height="13"><rect x="1.5" y="1.5" width="3" height="3" fill="none" stroke="#222"/><path d="M3 4.5v4h3M9 4v4M12 4v4" stroke="#222"/><circle cx="9" cy="3" r="1.5" fill="none" stroke="#222"/><circle cx="12" cy="3" r="1.5" fill="none" stroke="#222"/><rect x="6.5" y="8.5" width="3" height="3" fill="none" stroke="#222"/><rect x="10.5" y="8.5" width="3" height="3" fill="none" stroke="#222"/></svg>
<!-- RIGHT PANEL -->
<!-- tabs -->
<div class="a" style="left:1137px;top:103px;width:45px;height:33px;background:#b4b4b4;border:1px solid #8f8f8f;border-bottom:none;border-radius:4px 4px 0 0"></div>
<div class="a" style="left:1182px;top:105px;width:72px;height:30px;background:#a9a9a9;border:1px solid #8f8f8f;border-bottom:none;border-left:none;border-radius:0 4px 0 0"></div>
<div class="a" style="left:1254px;top:105px;width:70px;height:30px;background:#a9a9a9;border:1px solid #8f8f8f;border-bottom:none;border-left:none;border-radius:0 4px 0 0"></div>
<div class="a" style="left:1182px;top:134px;width:322px;height:1px;background:#8f8f8f"></div>
<div class="a" style="left:1137px;top:135px;width:367px;height:511px;background:#aeaeae;border-left:1px solid #8f8f8f"></div>
<div class="t" style="left:1147px;top:113px;font-size:13.5px;color:#262626">data</div>
<div class="t" style="left:1189px;top:113px;font-size:13.5px;color:#262626">functions</div>
<div class="t" style="left:1262px;top:113px;font-size:13.5px;color:#262626">variables</div>
<!-- list -->
<div class="a" style="left:1140px;top:137px;width:358px;height:298px;background:#b4b4b4;border:1px solid #929292"></div>
<div class="a" style="left:1141px;top:138px;width:356px;height:23px;background:#b2b2b2;border-bottom:1px solid #a0a0a0"></div>
<div class="a" style="left:1222px;top:140px;width:1px;height:20px;background:#a3a3a3"></div>
<div class="a" style="left:1324px;top:140px;width:1px;height:20px;background:#a3a3a3"></div>
<div class="t" style="left:1197px;top:143px;font-size:13.5px;color:#262626">#+#</div>
<div class="t" style="left:1230px;top:143px;font-size:13.5px;color:#262626">Name</div>
<div class="a" style="left:1141px;top:161px;width:184px;height:98px;background:#2f65a2"></div>
<div class="a" style="left:1222px;top:161px;width:1px;height:98px;background:#a9b8c8"></div>
<div class="a" style="left:1141px;top:185px;width:356px;height:1px;background:#a7a7a7"></div>
<div class="a" style="left:1141px;top:210px;width:356px;height:1px;background:#a7a7a7"></div>
<div class="a" style="left:1141px;top:234px;width:356px;height:1px;background:#a7a7a7"></div>
<div class="a" style="left:1141px;top:259px;width:356px;height:1px;background:#a7a7a7"></div>
<div class="t" style="left:1199px;top:166px;font-size:13.5px;color:#b9c5d2">0</div>
<div class="t" style="left:1226px;top:166px;font-size:13.5px;color:#b9c5d2">AP-GO001-lo...</div>
<div class="t" style="left:1199px;top:191px;font-size:13.5px;color:#b9c5d2">0</div>
<div class="t" style="left:1226px;top:191px;font-size:13.5px;color:#b9c5d2">AP-GO004-lo...</div>
<div class="t" style="left:1199px;top:215px;font-size:13.5px;color:#b9c5d2">0</div>
<div class="t" style="left:1226px;top:215px;font-size:13.5px;color:#b9c5d2">AP-GO005-3l...</div>
<div class="t" style="left:1199px;top:240px;font-size:13.5px;color:#b9c5d2">0</div>
<div class="t" style="left:1226px;top:240px;font-size:13.5px;color:#b9c5d2">AP-GO007_lo...</div>
<div class="a" style="left:1497px;top:137px;width:7px;height:304px;background:#a6a6a6;border-left:1px solid #8f8f8f"></div>
<div class="a" style="left:1138px;top:435px;width:366px;height:4px;background:#a4a4a4"></div>
<div class="a" style="left:1137px;top:439px;width:367px;height:1px;background:#8a8a8a"></div>
<!-- info -->
<div class="a" style="left:1140px;top:444px;width:358px;height:89px;background:#b2b2b2;border:1px solid #9a9a9a"></div>
<div class="t" style="left:1205px;top:447px;font-size:13.5px;color:#262626">points, 4265 active.</div>
<div class="t" style="left:1205px;top:466px;font-size:13.5px;color:#262626">AP-GO007_long</div>
<!-- combo -->
<div class="a" style="left:1140px;top:537px;width:358px;height:31px;background:linear-gradient(#b2b2b2,#a6a6a6);border:1px solid #8c8c8c;border-radius:3px"></div>
<div class="t" style="left:1205px;top:545px;font-size:13.5px;color:#262626">y selected</div>
<svg style="left:1478px;top:549px" width="10" height="6"><path d="M0 0h10L5 5z" fill="#262626"/></svg>
<!-- checks -->
<div class="cb" style="left:1201px;top:579px;width:14px;height:14px;background:#b0b0b0;border-color:#8a8a8a"></div>
<svg style="left:1203px;top:580px" width="12" height="12"><path d="M2 6L5 9L10 2.5" stroke="#262626" stroke-width="2" fill="none"/></svg>
<div class="t" style="left:1220px;top:579px;font-size:13.5px;color:#262626">line</div>
<div class="cb" style="left:1251px;top:579px;width:14px;height:14px;background:#b0b0b0;border-color:#8a8a8a"></div>
<div class="t" style="left:1271px;top:579px;font-size:13.5px;color:#262626">σ</div>
<svg style="left:1441px;top:577px" width="12" height="18"><path d="M2 2.5h8M2 14.5h8" stroke="#10b010" stroke-width="1.8"/><path d="M6 4v12M3.5 6.5L6 3.5L8.5 6.5" stroke="#111" stroke-width="1.4" fill="none"/></svg>
<div class="a" style="left:1454px;top:570px;width:44px;height:32px;background:#b4b4b4;border:1px solid #8c8c8c;border-radius:3px"></div>
<div class="t" style="left:1462px;top:579px;font-size:13.5px;color:#262626">0</div>
<div class="a" style="left:1483px;top:571px;width:1px;height:30px;background:#a8a8a8"></div><div class="a" style="left:1484px;top:586px;width:13px;height:1px;background:#a8a8a8"></div><svg style="left:1486px;top:575px" width="10" height="22"><path d="M1 5L5 1L9 5Z" fill="#1a1a1a"/><path d="M1 17L9 17L5 21Z" fill="#7a7a7a"/></svg>
<!-- buttons -->
<div class="a" style="left:1190px;top:605px;width:25px;height:34px;background:linear-gradient(#b2b2b2,#a8a8a8);border:1px solid #8c8c8c;border-radius:3px"></div>
<div class="a" style="left:1218px;top:605px;width:35px;height:34px;background:linear-gradient(#b2b2b2,#a8a8a8);border:1px solid #8c8c8c;border-radius:3px"></div>
<div class="a" style="left:1255px;top:605px;width:36px;height:34px;background:linear-gradient(#b2b2b2,#a8a8a8);border:1px solid #8c8c8c;border-radius:3px"></div>
<div class="a" style="left:1293px;top:605px;width:35px;height:34px;background:linear-gradient(#a4a4a4,#9c9c9c);border:1px solid #888;border-radius:3px"></div>
<svg style="left:1225px;top:611px" width="22" height="22"><path d="M3 4h5v12h-5zM8 6h4v10h-4zM12 8h5v10h-5z" fill="#9a9a9a" stroke="#222" stroke-width="1"/><path d="M4 6h3M4 9h3M9 8h2M13 10h3" stroke="#333"/></svg>
<svg style="left:1260px;top:612px" width="26" height="20"><rect x="1.5" y="3.5" width="23" height="13" fill="none" stroke="#333" stroke-dasharray="1.5 1"/><text x="3" y="14" font-family="Liberation Serif" font-size="11" fill="#222">Inam</text></svg>
<svg style="left:1303px;top:615px" width="14" height="14"><path d="M2 2L12 12M12 2L2 12" stroke="#1a1a1a" stroke-width="2.6"/></svg>
<div class="a" style="left:1137px;top:641px;width:367px;height:1px;background:#8f8f8f"></div>
<div class="a" style="left:1137px;top:646px;width:367px;height:1px;background:#9a9a9a"></div>

<!-- DIALOG -->
<div id="dlg" class="a"><div id="dlgtitle" class="a"></div></div>
<div class="a" style="left:300px;top:176px;width:904px;height:1px;background:#f4f4f3"></div>
<div class="t" style="left:720.5px;top:150.8px;font-size:13px;font-weight:bold;color:#eeeeec">Load Data</div>
<svg style="left:1183px;top:154px" width="9" height="9"><path d="M1 1L8 8M8 1L1 8" stroke="#eeeeec" stroke-width="2.2"/></svg>
<!-- path bar -->
<div class="btn" style="left:306px;top:182px;width:31px;height:31px"></div>
<svg style="left:312px;top:187px" width="20" height="20">
 <rect x="2.5" y="3.5" width="13" height="15" fill="#fff" stroke="#8a8a8a"/>
 <path d="M5 7h7M5 9.5h7M5 12h5" stroke="#c7c7c7" stroke-width="1"/>
 <path d="M6 16L8 12L16 3L18 5L10 14Z" fill="#f0a830" stroke="#7a5a10" stroke-width="0.8"/>
 <path d="M15.5 3.5L17.5 1.5L19.5 3.5L17.5 5.5Z" fill="#d02020"/>
 <path d="M6 16L6.8 13.5L8.5 15Z" fill="#333"/>
</svg>
<div class="btn" style="left:351px;top:182px;width:24px;height:31px"></div>
<svg style="left:359px;top:192px" width="8" height="10"><path d="M6 1L1 5L6 9Z" fill="#2e3436"/></svg>
<div class="btn" style="left:378px;top:182px;width:38px;height:31px"><div class="t" style="left:7px;top:8px">test</div></div>
<div class="btn" style="left:419px;top:182px;width:64px;height:31px"><div class="t" style="left:6px;top:8px">Desktop</div></div>
<div class="btn" style="left:486px;top:182px;width:45px;height:31px"><div class="t" style="left:6px;top:8px">IMAP</div></div>
<div class="btn" style="left:534px;top:182px;width:94px;height:31px"><div class="t" style="left:7px;top:8px">Experimental</div></div>
<div class="btn" style="left:631px;top:182px;width:52px;height:31px"><div class="t" style="left:6px;top:8px">AP003</div></div>
<div class="btn" style="left:686px;top:182px;width:42px;height:31px;background:#d9d9d7;box-shadow:none"><div class="t" style="left:6px;top:8px;font-weight:bold">TGA</div></div>
<div class="btn" style="left:746px;top:182px;width:25px;height:31px;background:#f0f0ef;box-shadow:none;border-color:#cfcfcd"></div>
<svg style="left:755px;top:192px" width="8" height="10"><path d="M1 1L6 5L1 9Z" fill="#8d9091"/></svg>
<div class="a" style="left:780px;top:180px;width:1px;height:480px;background:#cdcdcb"></div>
<div class="a" style="left:781px;top:180px;width:1px;height:480px;background:#f6f6f5"></div>
<!-- places -->
<div class="frame" style="left:305px;top:226px;width:118px;height:236px;background:#e0e0de"></div>
<div class="a" style="left:306px;top:227px;width:105px;height:201px;background:#fff"></div>
<div class="a" style="left:411px;top:227px;width:11px;height:201px;background:#cecece"></div>
<div class="a" style="left:414px;top:230px;width:6px;height:95px;background:#7b7e7f;border-radius:3px"></div>
<div class="a" style="left:306px;top:428px;width:116px;height:1px;background:#c4c4c2"></div>
<div class="t" style="left:311px;top:231px;font-size:13.5px;color:#8b8e8f">Places</div>
<div class="a" style="left:306px;top:249px;width:105px;height:1px;background:#e4e4e4"></div>
<div class="a" style="left:308px;top:301px;width:101px;height:1px;background:#e0e0e0"></div>
<svg style="left:307px;top:254px" width="18" height="170">
 <circle cx="8" cy="7.5" r="5" fill="#f4f4f4" stroke="#2a4aa0" stroke-width="3"/><path d="M11.5 11.5L15 15" stroke="#222" stroke-width="2.5" stroke-linecap="round"/>
 <circle cx="8" cy="32" r="6.5" fill="#eee" stroke="#888"/><path d="M8 27v5h4" stroke="#555" stroke-width="1.2" fill="none"/><path d="M1 28L6 25L7 33Z" fill="#e8c020"/>
 <defs><linearGradient id="fg" x1="0" y1="0" x2="0" y2="1"><stop offset="0" stop-color="#8ab8ea"/><stop offset="1" stop-color="#4f86cc"/></linearGradient>
 <linearGradient id="dg" x1="0" y1="0" x2="0" y2="1"><stop offset="0" stop-color="#f4f4f4"/><stop offset="1" stop-color="#c8c8c8"/></linearGradient></defs>
 <path d="M1.5 55.5h5l1.5 1.5h7.5v11h-14z" fill="url(#fg)" stroke="#3a68a8" stroke-linejoin="round"/>
 <path d="M5 66v-3.5l3.5-3 3.5 3v3.5M7.5 66v-2h2v2" fill="none" stroke="#2a5898" stroke-width="0.9"/>
 <path d="M1.5 79.5h5l1.5 1.5h7.5v11h-14z" fill="url(#fg)" stroke="#3a68a8" stroke-linejoin="round"/>
 <path d="M5 84v-1h1M11 83h1v1M12 89v1h-1M6 90h-1v-1" fill="none" stroke="#2a5898" stroke-width="0.9"/><rect x="7" y="85" width="3" height="3" fill="none" stroke="#2a5898" stroke-width="0.8"/>
 <rect x="2.5" y="103.5" width="13" height="12.5" rx="2" fill="url(#dg)" stroke="#7a7a7a"/><ellipse cx="9" cy="109.5" rx="4.5" ry="3.5" fill="none" stroke="#b8b8b8"/>
 <rect x="1.5" y="128.5" width="15" height="11" rx="1.5" fill="url(#dg)" stroke="#6a6a6a"/><path d="M3 136.5h12" stroke="#333" stroke-width="1.2"/>
 <rect x="2.5" y="152.5" width="13" height="12.5" rx="2" fill="url(#dg)" stroke="#7a7a7a"/><ellipse cx="9" cy="158.5" rx="4.5" ry="3.5" fill="none" stroke="#b8b8b8"/>
</svg>
<div class="t dt" style="left:327px;top:255px">Search</div>
<div class="t dt" style="left:327px;top:279px">Recently U...</div>
<div class="t dt" style="left:327px;top:308px">aleplo</div>
<div class="t dt" style="left:327px;top:332px">Desktop</div>
<div class="t dt" style="left:327px;top:357px">File System</div>
<div class="t dt" style="left:327px;top:381px">test</div>
<div class="t dt" style="left:327px;top:405px">182 GB Vol...</div>
<div class="btn" style="left:310px;top:435px;width:23px;height:23px"></div>
<svg style="left:315px;top:440px" width="13" height="13"><path d="M6.5 1.5v10M1.5 6.5h10" stroke="#3a5070" stroke-width="3.4" stroke-linecap="round"/><path d="M6.5 2v9M2 6.5h9" stroke="#8aa0c0" stroke-width="1.4"/></svg>
<div class="btn" style="left:336px;top:435px;width:24px;height:23px"></div>
<svg style="left:342px;top:440px" width="13" height="13"><path d="M1.5 6.5h10" stroke="#3a5070" stroke-width="3.4" stroke-linecap="round"/><path d="M2 6.5h9" stroke="#8aa0c0" stroke-width="1.4"/></svg>
<div class="a" style="left:428px;top:226px;width:1px;height:237px;background:#c6c6c4"></div>
<!-- file list -->
<div class="frame" style="left:432px;top:226px;width:339px;height:198px"></div>
<div class="a" style="left:759px;top:227px;width:11px;height:196px;background:#cecece"></div>
<div class="a" style="left:762px;top:230px;width:6px;height:190px;background:#7b7e7f;border-radius:3px"></div>
<div class="a" style="left:627px;top:229px;width:1px;height:19px;background:#e6e6e6"></div>
<div class="a" style="left:686px;top:229px;width:1px;height:19px;background:#e6e6e6"></div>
<div class="a" style="left:433px;top:249px;width:326px;height:1px;background:#eaeaea"></div>
<div class="t" style="left:441px;top:231px;font-size:13.5px;color:#8b8e8f">Name</div>
<svg style="left:606px;top:236px" width="10" height="6"><path d="M0 0h10L5 5z" fill="#8b8e8f"/></svg>
<div class="t" style="left:635px;top:231px;font-size:13.5px;color:#8b8e8f">Size</div>
<div class="t" style="left:694px;top:231px;font-size:13.5px;color:#8b8e8f">Modified</div>
<div class="a" style="left:433px;top:250px;width:326px;height:24px;background:#4a90d9"></div>
<svg style="left:437px;top:253px" width="14" height="44">
 <path d="M1.5 1.5h8l3 3v12h-11z" fill="#f4f4f4" stroke="#9a9a9a"/><path d="M4 6h6M4 8.5h6M4 11h6M4 13.5h6" stroke="#c8c8c8"/>
 <path d="M1.5 25.5h8l3 3v12h-11z" fill="#f4f4f4" stroke="#9a9a9a"/><path d="M4 30h6M4 32.5h6M4 35h6M4 37.5h6" stroke="#c8c8c8"/>
</svg>
<div class="t dt" style="left:455px;top:255px;color:#fff">AP003w.txt</div>
<div class="t dt" style="left:633px;top:255px;color:#fff">1.3 MB</div>
<div class="t dt" style="left:692px;top:255px;color:#fff">03/16/18</div>
<div class="t dt" style="left:455px;top:279px">TGA-AP003.sciprj</div>
<div class="t dt" style="left:633px;top:279px">10.8 MB</div>
<div class="t dt" style="left:692px;top:279px">03/18/18</div>
<div class="btn" style="left:433px;top:431px;width:338px;height:31px"><div class="t" style="left:8px;top:8px">All Files (*)</div></div>
<svg style="left:749px;top:443px" width="10" height="6"><path d="M0 0h10L5 5z" fill="#2e3436"/></svg>
<!-- format row -->
<div class="t dt" style="left:311px;top:484px">file format:</div>
<div class="btn" style="left:384px;top:475px;width:130px;height:32px"><div class="t" style="left:8px;top:9px">&lt;automatic&gt;</div></div>
<svg style="left:492px;top:488px" width="10" height="6"><path d="M0 0h10L5 5z" fill="#2e3436"/></svg>
<div class="t dt" style="left:526px;top:484px">block:</div>
<div class="btn" style="left:570px;top:475px;width:200px;height:32px;background:#f0f0ef;box-shadow:none;border-color:#cfcfcd"><div class="t" style="left:8px;top:9px;color:#9a9d9e">Block #1</div></div>
<svg style="left:749px;top:488px" width="10" height="6"><path d="M0 0h10L5 5z" fill="#9a9d9e"/></svg>
<div class="cb" style="left:306px;top:517px"></div>
<div class="t dt" style="left:327px;top:518px">decimal comma</div>
<!-- select columns -->
<div class="a" style="left:305px;top:555px;width:466px;height:53px;border:1px solid #c4c4c2"></div>
<div class="a" style="left:307px;top:548px;width:211px;height:12px;background:#e8e8e7"></div>
<div class="t dt" style="left:309px;top:548px">Select columns (0 for point index):</div>
<div class="t dt" style="left:310px;top:579px">x</div>
<div class="frame" style="left:328px;top:570px;width:44px;height:33px;border-color:#b8b8b6;border-radius:3px"></div><div class="a" style="left:357px;top:571px;width:1px;height:31px;background:#e4e4e2"></div><div class="a" style="left:358px;top:586px;width:13px;height:1px;background:#ececea"></div>
<div class="t dt" style="left:337px;top:579px">4</div>
<svg style="left:360px;top:575px" width="10" height="22"><path d="M1 5.5L5 1.5L9 5.5Z M1 17L9 17L5 21Z" fill="#1e2224"/></svg>
<div class="t dt" style="left:383px;top:579px">y</div>
<div class="frame" style="left:402px;top:570px;width:44px;height:33px;border-color:#b8b8b6;border-radius:3px"></div><div class="a" style="left:431px;top:571px;width:1px;height:31px;background:#e4e4e2"></div><div class="a" style="left:432px;top:586px;width:13px;height:1px;background:#ececea"></div>
<div class="t dt" style="left:410px;top:579px">3</div>
<svg style="left:434px;top:575px" width="10" height="22"><path d="M1 5.5L5 1.5L9 5.5Z M1 17L9 17L5 21Z" fill="#1e2224"/></svg>
<div class="radio" style="left:459px;top:578px"></div>
<div class="t dt" style="left:480px;top:579px">σ</div>
<div class="frame" style="left:500px;top:570px;width:44px;height:33px;border-color:#d0d0ce;border-radius:3px;background:#f0f0ef"></div><div class="a" style="left:529px;top:571px;width:1px;height:31px;background:#e2e2e0"></div><div class="a" style="left:530px;top:586px;width:13px;height:1px;background:#e2e2e0"></div>
<div class="t dt" style="left:509px;top:579px;color:#a0a3a4">3</div>
<svg style="left:532px;top:575px" width="10" height="22"><path d="M1 5.5L5 1.5L9 5.5Z M1 17L9 17L5 21Z" fill="#a8abac"/></svg>
<div class="t dt" style="left:556px;top:579px">or</div>
<div class="radio" style="left:580px;top:578px"></div>
<div class="a" style="left:585px;top:583px;width:5px;height:5px;border-radius:50%;background:#2e3436"></div>
<div class="t dt" style="left:601px;top:579px">σ=max{√y, 1}</div>
<div class="t dt" style="left:692px;top:579px">or</div>
<div class="radio" style="left:717px;top:578px"></div>
<div class="t dt" style="left:738px;top:579px">σ=1</div>
<!-- data title -->
<div class="t dt" style="left:305px;top:629px">data title:</div>
<div class="frame" style="left:372px;top:620px;width:399px;height:32px;border-color:#b8b8b6;border-radius:3px"></div>
<div class="t dt" style="left:381px;top:629px;color:#1e1e1e">AP003w:4:3</div>
<div class="a" style="left:305px;top:658px;width:475px;height:1px;background:#d0d0ce"></div>
<div class="a" style="left:785px;top:658px;width:415px;height:1px;background:#d3d3d1"></div>
<!-- bottom buttons -->
<div class="btn" style="left:601px;top:666px;width:86px;height:33px;background:#f0f0ef;box-shadow:none;border-color:#cfcfcd"><div class="t" style="left:5px;top:9px;color:#9a9d9e">Replace @?</div></div>
<div class="btn" style="left:698px;top:666px;width:116px;height:33px"><div class="t" style="left:7px;top:9px">Open in new slot</div></div>
<div class="btn" style="left:826px;top:666px;width:77px;height:33px"><div class="t" style="left:32px;top:9px">Close</div></div>
<svg style="left:837px;top:673px" width="18" height="18"><path d="M3 3L15 15M15 3L3 15" stroke="#5f6263" stroke-width="4.4" stroke-linecap="round"/><path d="M3 3L15 15M15 3L3 15" stroke="#b8babb" stroke-width="2.2" stroke-linecap="round"/></svg>
<!-- preview text -->
<div class="frame" style="left:790px;top:181px;width:409px;height:199px;border-color:#bababa"></div>
<div class="a" style="left:1187px;top:182px;width:11px;height:197px;background:#cecece"></div>
<div class="a" style="left:1190px;top:184px;width:5px;height:40px;background:#7b7e7f;border-radius:3px"></div>
<div class="a" style="left:791px;top:182px;width:396px;height:197px;overflow:hidden"><div class="a" style="left:-791px;top:-182px;width:1504px;height:846px"><div class="t pv" style="left:824.5px;top:184.0px">Index</div>
<div class="t pv" style="left:905.7px;top:184.0px">t</div>
<div class="t pv" style="left:944.5px;top:184.0px">Poids</div>
<div class="t pv" style="left:1022.0px;top:184.0px">Tr</div>
<div class="t pv" style="left:832.3px;top:203.0px">[#]</div>
<div class="t pv" style="left:892.2px;top:203.0px">[s]</div>
<div class="t pv" style="left:946.2px;top:203.0px">[mg]</div>
<div class="t pv" style="left:1011.9px;top:203.0px">[°C]</div>
<div class="t pv" style="right:657.2px;top:221.7px">0</div>
<div class="t pv" style="left:854.9px;top:221.7px">0.00000e+000</div>
<div class="t pv" style="left:950.9px;top:221.7px">6.29500e+000</div>
<div class="t pv" style="left:1046.9px;top:221.7px">2.50000e+001</div>
<div class="t pv" style="right:657.2px;top:240.4px">1</div>
<div class="t pv" style="left:854.9px;top:240.4px">1.00000e+000</div>
<div class="t pv" style="left:950.9px;top:240.4px">6.29500e+000</div>
<div class="t pv" style="left:1046.9px;top:240.4px">2.50333e+001</div>
<div class="t pv" style="right:657.2px;top:259.1px">2</div>
<div class="t pv" style="left:854.9px;top:259.1px">2.00000e+000</div>
<div class="t pv" style="left:950.9px;top:259.1px">6.29500e+000</div>
<div class="t pv" style="left:1046.9px;top:259.1px">2.50667e+001</div>
<div class="t pv" style="right:657.2px;top:277.8px">3</div>
<div class="t pv" style="left:854.9px;top:277.8px">3.00000e+000</div>
<div class="t pv" style="left:950.9px;top:277.8px">6.29500e+000</div>
<div class="t pv" style="left:1046.9px;top:277.8px">2.51000e+001</div>
<div class="t pv" style="right:657.2px;top:296.5px">4</div>
<div class="t pv" style="left:854.9px;top:296.5px">4.00000e+000</div>
<div class="t pv" style="left:950.9px;top:296.5px">6.29500e+000</div>
<div class="t pv" style="left:1046.9px;top:296.5px">2.51333e+001</div>
<div class="t pv" style="right:657.2px;top:315.2px">5</div>
<div class="t pv" style="left:854.9px;top:315.2px">5.00000e+000</div>
<div class="t pv" style="left:950.9px;top:315.2px">6.29500e+000</div>
<div class="t pv" style="left:1046.9px;top:315.2px">2.51667e+001</div>
<div class="t pv" style="right:657.2px;top:333.9px">6</div>
<div class="t pv" style="left:854.9px;top:333.9px">6.00000e+000</div>
<div class="t pv" style="left:950.9px;top:333.9px">6.29500e+000</div>
<div class="t pv" style="left:1046.9px;top:333.9px">2.52000e+001</div>
<div class="t pv" style="right:657.2px;top:352.6px">7</div>
<div class="t pv" style="left:854.9px;top:352.6px">7.00000e+000</div>
<div class="t pv" style="left:950.9px;top:352.6px">6.29500e+000</div>
<div class="t pv" style="left:1046.9px;top:352.6px">2.52333e+001</div>
<div class="t pv" style="right:657.2px;top:371.3px">8</div>
<div class="t pv" style="left:854.9px;top:371.3px">8.00000e+000</div>
<div class="t pv" style="left:950.9px;top:371.3px">6.29500e+000</div>
<div class="t pv" style="left:1046.9px;top:371.3px">2.52667e+001</div></div></div>
<div class="cb" style="left:792px;top:393px"></div>
<svg style="left:794px;top:395px" width="12" height="12"><path d="M2 6.2L4.8 9L10 2.5" stroke="#1e2224" stroke-width="2.4" fill="none"/></svg>
<div class="a" style="left:810px;top:389px;width:117px;height:23px;border:1px solid #cfcfcd;border-radius:3px"></div>
<div class="t dt" style="left:812px;top:394px">file preview (64kB)</div>
<div class="a" style="left:785px;top:420px;width:415px;height:1px;background:#d0d0ce"></div>
<!-- preview plot -->
<div class="a" style="left:790px;top:430px;width:410px;height:191px;background:#3f3f3f"></div>
<svg style="left:0;top:0" width="1504" height="846">
 <polyline points="831,434 836,438 841,444 846,452 852,461 858,470 864,478 870,485 876,490 884,495 896,501 910,505 925,509 940,513 951,516 957,518.5 962,522 967,527 972,533 977,541 982,549 988,556.5 995,562 1002,567 1015,575 1031,583 1050,589 1068,593 1085,595 1104.7,596.8 1141,597.6 1165,599.5 1192,602.3" fill="none" stroke="#00e000" stroke-width="1.3"/>
 <path d="M790 453.5h3M790 521.5h3M790 589.5h3M911.5 601v3M1004.5 601v3M1098.5 601v3" stroke="#ddd" stroke-width="1"/>
</svg>
<div class="t" style="left:795px;top:448.5px;font-size:11.5px;color:#e6e6e6">6</div>
<div class="t" style="left:795px;top:516.5px;font-size:11.5px;color:#e6e6e6">5</div>
<div class="t" style="left:795px;top:584.5px;font-size:11.5px;color:#e6e6e6">4</div>
<div class="t" style="left:901px;top:608.5px;font-size:11.5px;color:#e6e6e6">200</div>
<div class="t" style="left:994px;top:608.5px;font-size:11.5px;color:#e6e6e6">400</div>
<div class="t" style="left:1087px;top:608.5px;font-size:11.5px;color:#e6e6e6">600</div>
<div class="cb" style="left:792px;top:635px"></div>
<svg style="left:794px;top:637px" width="12" height="12"><path d="M2 6.2L4.8 9L10 2.5" stroke="#1e2224" stroke-width="2.4" fill="none"/></svg>
<div class="t dt" style="left:812px;top:635px">plot</div>

</body></html>
